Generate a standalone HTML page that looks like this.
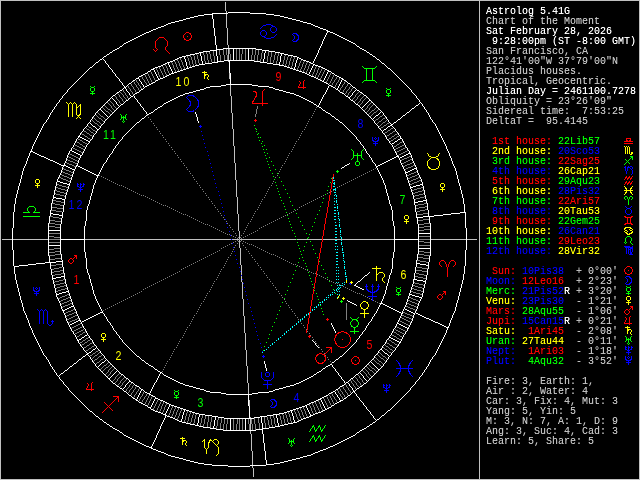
<!DOCTYPE html>
<html><head><meta charset="utf-8"><title>Astrolog 5.41G</title>
<style>html,body{margin:0;padding:0;background:#000;overflow:hidden}svg{display:block}text,tspan{white-space:pre}</style>
</head><body>
<svg width="640" height="480" viewBox="0 0 640 480">
<defs><filter id="tf" x="0" y="0" width="640" height="480" filterUnits="userSpaceOnUse" color-interpolation-filters="sRGB"><feComponentTransfer><feFuncR type="linear" slope="1"/><feFuncG type="linear" slope="1"/><feFuncB type="linear" slope="1"/><feFuncA type="linear" slope="1.2"/></feComponentTransfer></filter><filter id="tf2" x="0" y="0" width="640" height="480" filterUnits="userSpaceOnUse" color-interpolation-filters="sRGB"><feComponentTransfer><feFuncA type="linear" slope="1"/></feComponentTransfer></filter></defs>
<rect width="640" height="480" fill="#000"/>
<g fill="none" stroke-width="1" shape-rendering="crispEdges"><path stroke="#c0c0c0" d="M0,0.5h640M2,239.5h10M13,239.5h35M85,239.5h146M232,239.5h7M240,239.5h56M297,239.5h25M323,239.5h71M431,239.5h35M467,239.5h10M0,479.5h640M0.5,1v478M225.5,2v9M226.5,11v2M226.5,14v14M227.5,28v17M228.5,45v3M228.5,49v11M228,61.5h1M229.5,73v6M230.5,85v11M231.5,96v17M232.5,113v16M233.5,129v17M234.5,146v17M235.5,163v17M236.5,180v17M237.5,197v17M238.5,214v17M239.5,231v8M239.5,240v8M240.5,248v17M241.5,265v10M241.5,276v6M242.5,282v17M243.5,299v17M244.5,316v17M245.5,333v17M246.5,350v16M247.5,366v17M248.5,383v11M249.5,400v6M250,417.5h1M250.5,419v11M250.5,431v3M251.5,434v17M252.5,451v14M252.5,466v2M253.5,468v9M479.5,1v478M639.5,1v478"/><path stroke="#fff" d="M228,12.5h22M212,13.5h16M250,13.5h16M204,14.5h9M266,14.5h8M198,15.5h6M274,15.5h6M194,16.5h4M280,16.5h4M190,17.5h4M284,17.5h4M186,18.5h4M288,18.5h4M183,19.5h3M292,19.5h4M179,20.5h4M296,20.5h4M175,21.5h4M300,21.5h3M171,22.5h4M303,22.5h4M168,23.5h3M307,23.5h4M166,24.5h2M311,24.5h2M164,25.5h2M313,25.5h2M161,26.5h3M315,26.5h3M158,27.5h3M318,27.5h2M156,28.5h2M320,28.5h3M153,29.5h3M323,29.5h3M151,30.5h2M326,30.5h2M149,31.5h2M327,31.5h3M146,32.5h3M330,32.5h3M144,33.5h2M333,33.5h2M142,34.5h2M335,34.5h2M140,35.5h2M337,35.5h2M138,36.5h2M339,36.5h2M136,37.5h2M341,37.5h2M134,38.5h2M343,38.5h2M132,39.5h2M345,39.5h2M130,40.5h2M347,40.5h2M128,41.5h2M349,41.5h2M126,42.5h2M351,42.5h2M124,43.5h2M353,43.5h2M120,46.5h2M357,46.5h2M117,48.5h2M223,48.5h33M360,48.5h2M115,49.5h2M216,49.5h7M256,49.5h6M362,49.5h2M113,50.5h2M210,50.5h7M262,50.5h7M364,50.5h2M203,51.5h7M269,51.5h6M110,52.5h2M199,52.5h4M275,52.5h5M367,52.5h2M195,53.5h4M280,53.5h4M107,54.5h2M190,54.5h5M284,54.5h4M370,54.5h2M186,55.5h4M288,55.5h5M104,56.5h2M182,56.5h4M293,56.5h4M373,56.5h2M179,57.5h3M297,57.5h2M177,58.5h2M299,58.5h2M100,59.5h2M175,59.5h2M301,59.5h2M377,59.5h2M173,60.5h2M224,60.5h30M303,60.5h3M170,61.5h3M217,61.5h7M254,61.5h6M306,61.5h3M96,62.5h2M167,62.5h3M212,62.5h6M260,62.5h7M309,62.5h2M165,63.5h2M205,63.5h7M267,63.5h6M311,63.5h2M382,63.5h2M163,64.5h2M199,64.5h6M273,64.5h7M313,64.5h2M161,65.5h2M195,65.5h4M279,65.5h5M315,65.5h3M158,66.5h3M192,66.5h3M284,66.5h3M318,66.5h3M90,67.5h2M155,67.5h3M189,67.5h3M287,67.5h3M321,67.5h2M153,68.5h2M186,68.5h3M290,68.5h3M323,68.5h2M388,68.5h2M151,69.5h3M183,69.5h3M293,69.5h3M325,69.5h2M180,70.5h3M296,70.5h3M327,70.5h2M148,71.5h2M177,71.5h3M299,71.5h3M328,71.5h3M174,72.5h3M302,72.5h3M145,73.5h2M171,73.5h3M305,73.5h2M332,73.5h2M143,74.5h2M169,74.5h2M307,74.5h2M141,75.5h2M167,75.5h2M309,75.5h2M335,75.5h2M139,76.5h2M165,76.5h2M311,76.5h3M337,76.5h2M163,77.5h2M314,77.5h2M339,77.5h2M136,78.5h3M160,78.5h3M316,78.5h2M341,78.5h2M158,79.5h2M318,79.5h2M342,79.5h2M133,80.5h2M156,80.5h2M320,80.5h2M344,80.5h2M322,81.5h2M153,82.5h2M324,82.5h2M129,83.5h2M151,83.5h2M326,83.5h2M348,83.5h2M149,84.5h2M226,84.5h26M147,85.5h2M221,85.5h5M252,85.5h6M329,85.5h2M145,86.5h2M210,86.5h11M258,86.5h11M331,86.5h2M124,87.5h2M206,87.5h4M269,87.5h4M333,87.5h2M353,87.5h2M204,88.5h2M273,88.5h2M141,89.5h2M200,89.5h4M275,89.5h4M336,89.5h2M120,90.5h2M196,90.5h4M279,90.5h4M357,90.5h2M193,91.5h3M283,91.5h3M117,92.5h2M137,92.5h2M189,92.5h4M286,92.5h4M340,92.5h2M360,92.5h2M135,93.5h2M185,93.5h4M290,93.5h4M342,93.5h2M183,94.5h2M294,94.5h2M113,95.5h2M180,95.5h3M296,95.5h3M364,95.5h2M131,96.5h2M178,96.5h2M299,96.5h2M346,96.5h2M176,97.5h2M301,97.5h2M348,97.5h2M174,98.5h2M303,98.5h2M172,99.5h2M305,99.5h2M126,100.5h2M170,100.5h2M307,100.5h2M351,100.5h2M369,100.5h2M168,101.5h2M309,101.5h2M166,102.5h2M311,102.5h2M164,103.5h2M121,104.5h2M314,104.5h2M356,104.5h2M416,105.5h2M160,106.5h2M317,106.5h2M158,107.5h2M319,107.5h2M412,108.5h2M99,109.5h2M155,109.5h2M323,110.5h2M151,112.5h2M326,112.5h2M407,112.5h2M149,113.5h2M328,113.5h2M147,114.5h2M376,115.5h2M403,115.5h2M332,116.5h2M142,118.5h2M336,119.5h2M398,119.5h2M137,122.5h2M340,122.5h2M394,122.5h2M391,124.5h2M390,125.5h2M93,126.5h2M388,126.5h2M97,129.5h2M384,129.5h2M78,136.5h2M80,137.5h2M82,138.5h2M400,138.5h2M84,139.5h2M398,139.5h2M86,140.5h2M88,141.5h2M395,141.5h2M392,143.5h2M70,150.5h2M30,151.5h3M72,151.5h2M33,152.5h2M74,152.5h2M35,153.5h2M76,153.5h2M408,153.5h3M37,154.5h2M78,154.5h2M406,154.5h2M39,155.5h2M80,155.5h2M404,155.5h2M41,156.5h3M396,156.5h3M402,156.5h2M44,157.5h2M394,157.5h2M400,157.5h2M46,158.5h2M392,158.5h2M48,159.5h2M390,159.5h2M50,160.5h3M388,160.5h2M53,161.5h2M386,161.5h2M55,162.5h2M384,162.5h2M57,163.5h2M382,163.5h2M59,164.5h2M347,164.5h2M380,164.5h2M61,165.5h5M76,165.5h2M345,165.5h2M378,165.5h2M66,166.5h2M78,166.5h2M376,166.5h2M68,167.5h2M80,167.5h2M342,167.5h2M70,168.5h2M82,168.5h2M414,168.5h3M72,169.5h3M84,169.5h2M412,169.5h2M86,170.5h2M410,170.5h2M88,171.5h2M408,171.5h2M90,172.5h2M405,172.5h3M92,173.5h2M94,174.5h2M96,175.5h3M57,181.5h3M60,182.5h3M63,183.5h4M67,184.5h3M420,184.5h3M416,185.5h4M413,186.5h3M410,187.5h3M53,197.5h3M56,198.5h6M62,199.5h3M423,200.5h4M418,201.5h5M414,202.5h4M460,212.5h6M50,213.5h3M451,213.5h9M53,214.5h6M443,214.5h8M59,215.5h4M434,215.5h9M423,216.5h11M416,217.5h7M48,230.5h13M418,233.5h13M60,239.5h25M394,239.5h25M48,245.5h13M418,248.5h13M56,261.5h7M45,262.5h11M36,263.5h9M416,263.5h4M28,264.5h8M420,264.5h6M19,265.5h9M426,265.5h3M14,266.5h5M365,275.5h2M61,276.5h4M56,277.5h5M52,278.5h4M413,279.5h4M417,280.5h6M358,281.5h2M423,281.5h3M354,285.5h2M356,286.5h2M358,287.5h2M360,288.5h2M362,289.5h2M66,291.5h3M62,292.5h4M59,293.5h3M56,294.5h3M409,294.5h3M412,295.5h3M415,296.5h4M419,297.5h3M348,301.5h2M350,302.5h2M352,303.5h2M380,303.5h3M354,304.5h2M383,304.5h2M385,305.5h2M71,306.5h3M387,306.5h2M69,307.5h2M389,307.5h2M67,308.5h2M391,308.5h2M65,309.5h2M393,309.5h2M405,309.5h2M62,310.5h3M395,310.5h2M407,310.5h2M397,311.5h2M409,311.5h2M100,312.5h3M399,312.5h2M411,312.5h2M98,313.5h2M401,313.5h2M413,313.5h2M416,313.5h2M96,314.5h2M418,314.5h2M94,315.5h2M420,315.5h2M92,316.5h2M422,316.5h2M90,317.5h2M424,317.5h2M88,318.5h2M426,318.5h3M86,319.5h2M429,319.5h2M78,320.5h3M84,320.5h2M431,320.5h2M76,321.5h2M82,321.5h2M433,321.5h2M74,322.5h2M435,322.5h3M72,323.5h2M397,323.5h2M438,323.5h2M70,324.5h2M399,324.5h2M440,324.5h2M401,325.5h2M442,325.5h2M403,326.5h2M444,326.5h2M405,327.5h2M446,327.5h3M407,328.5h2M85,335.5h2M82,337.5h2M389,337.5h2M391,338.5h2M79,339.5h2M393,339.5h2M77,340.5h2M395,340.5h2M397,341.5h2M399,342.5h2M93,349.5h2M380,349.5h2M89,352.5h2M87,353.5h2M385,353.5h2M86,354.5h2M83,356.5h2M137,356.5h2M340,356.5h2M79,359.5h2M336,359.5h2M142,360.5h2M102,362.5h2M332,362.5h2M74,363.5h2M146,363.5h2M330,364.5h2M149,365.5h2M328,365.5h2M70,366.5h2M151,366.5h2M326,366.5h2M323,368.5h2M155,369.5h2M378,369.5h2M65,370.5h2M158,371.5h2M319,371.5h2M160,372.5h2M317,372.5h2M61,373.5h2M121,374.5h2M314,374.5h2M356,374.5h2M164,375.5h2M166,376.5h2M311,376.5h2M168,377.5h2M309,377.5h2M108,378.5h2M126,378.5h2M170,378.5h2M307,378.5h2M351,378.5h2M172,379.5h2M305,379.5h2M174,380.5h2M303,380.5h2M129,381.5h2M176,381.5h2M301,381.5h2M131,382.5h2M178,382.5h2M299,382.5h2M346,382.5h2M113,383.5h2M180,383.5h3M296,383.5h3M364,383.5h2M183,384.5h2M294,384.5h2M135,385.5h2M185,385.5h4M290,385.5h4M342,385.5h2M117,386.5h2M137,386.5h2M189,386.5h4M286,386.5h4M340,386.5h2M360,386.5h2M193,387.5h3M283,387.5h3M120,388.5h2M196,388.5h4M279,388.5h4M357,388.5h2M141,389.5h2M200,389.5h4M275,389.5h4M336,389.5h2M204,390.5h2M273,390.5h2M124,391.5h2M206,391.5h4M269,391.5h4M333,391.5h2M353,391.5h2M145,392.5h2M210,392.5h11M258,392.5h11M331,392.5h2M147,393.5h3M221,393.5h5M252,393.5h6M329,393.5h2M149,394.5h2M226,394.5h26M129,395.5h2M151,395.5h2M326,395.5h2M348,395.5h2M153,396.5h2M324,396.5h2M322,397.5h2M133,398.5h2M155,398.5h3M320,398.5h2M344,398.5h2M135,399.5h2M158,399.5h2M318,399.5h3M136,400.5h2M160,400.5h3M316,400.5h2M340,400.5h3M163,401.5h2M314,401.5h2M339,401.5h2M139,402.5h2M165,402.5h2M311,402.5h3M337,402.5h2M141,403.5h2M167,403.5h2M309,403.5h2M335,403.5h2M143,404.5h2M169,404.5h2M307,404.5h2M145,405.5h2M171,405.5h3M305,405.5h2M332,405.5h2M174,406.5h3M302,406.5h3M148,407.5h3M177,407.5h3M299,407.5h3M329,407.5h2M180,408.5h3M296,408.5h3M327,408.5h2M151,409.5h2M183,409.5h3M293,409.5h3M325,409.5h2M153,410.5h2M186,410.5h3M290,410.5h3M323,410.5h2M388,410.5h2M90,411.5h2M155,411.5h3M189,411.5h3M287,411.5h3M321,411.5h2M158,412.5h3M192,412.5h3M284,412.5h3M318,412.5h3M161,413.5h2M195,413.5h4M279,413.5h5M315,413.5h3M163,414.5h3M199,414.5h6M273,414.5h6M313,414.5h2M165,415.5h2M205,415.5h7M267,415.5h6M310,415.5h3M382,415.5h2M96,416.5h2M167,416.5h3M212,416.5h6M260,416.5h7M309,416.5h2M170,417.5h3M218,417.5h6M254,417.5h6M306,417.5h3M173,418.5h2M224,418.5h30M303,418.5h3M100,419.5h2M175,419.5h2M301,419.5h2M377,419.5h2M177,420.5h2M299,420.5h2M179,421.5h3M297,421.5h2M104,422.5h2M182,422.5h4M293,422.5h4M373,422.5h2M186,423.5h4M288,423.5h5M107,424.5h2M190,424.5h5M284,424.5h4M370,424.5h2M195,425.5h4M280,425.5h4M110,426.5h2M199,426.5h4M275,426.5h5M367,426.5h2M203,427.5h7M269,427.5h6M113,428.5h2M210,428.5h6M262,428.5h7M364,428.5h2M115,429.5h2M216,429.5h7M256,429.5h7M362,429.5h2M117,430.5h2M223,430.5h33M360,430.5h2M120,432.5h2M357,432.5h2M124,435.5h2M353,435.5h2M126,436.5h2M351,436.5h2M128,437.5h2M349,437.5h2M130,438.5h2M347,438.5h2M132,439.5h2M345,439.5h2M134,440.5h2M343,440.5h2M136,441.5h2M341,441.5h2M138,442.5h2M339,442.5h2M140,443.5h2M337,443.5h2M142,444.5h2M335,444.5h2M144,445.5h2M333,445.5h2M146,446.5h3M330,446.5h3M149,447.5h3M328,447.5h2M151,448.5h2M326,448.5h2M153,449.5h3M323,449.5h3M156,450.5h2M320,450.5h3M158,451.5h3M318,451.5h2M161,452.5h3M315,452.5h3M164,453.5h2M313,453.5h2M166,454.5h2M311,454.5h2M168,455.5h3M307,455.5h4M171,456.5h4M303,456.5h4M175,457.5h4M300,457.5h3M179,458.5h4M296,458.5h4M183,459.5h3M292,459.5h4M186,460.5h4M288,460.5h4M190,461.5h4M284,461.5h4M194,462.5h4M280,462.5h4M198,463.5h6M274,463.5h6M204,464.5h8M266,464.5h8M212,465.5h16M250,465.5h16M228,466.5h22M12.5,228v22M13.5,212v16M13.5,250v16M14.5,204v8M14.5,267v7M15.5,198v6M15.5,274v6M16.5,194v4M16.5,280v4M17.5,190v4M17.5,284v4M18.5,186v4M18.5,288v4M19.5,183v3M19.5,292v4M20.5,179v4M20.5,296v4M21.5,175v4M21.5,300v3M22.5,171v4M22.5,303v4M23.5,168v3M23.5,307v4M24.5,166v2M24.5,311v2M25.5,164v2M25.5,313v2M26.5,161v3M26.5,315v3M27.5,158v3M27.5,318v2M28.5,156v2M28.5,320v3M29.5,153v3M29.5,323v3M30,152.5h1M30.5,326v2M31.5,149v2M31.5,328v2M32.5,146v3M32.5,330v3M33.5,144v2M33.5,333v2M34.5,142v2M34.5,335v2M35.5,140v2M35.5,337v2M36.5,138v2M36.5,339v2M37.5,136v2M37.5,341v2M38.5,134v2M38.5,343v2M39.5,132v2M39.5,345v2M40.5,130v2M40.5,347v2M41.5,128v2M41.5,349v2M42.5,126v2M42.5,351v2M43.5,124v2M43.5,353v2M44,123.5h1M44,355.5h1M45,122.5h1M45,356.5h1M46.5,120v2M46.5,357v2M47,119.5h1M47,359.5h1M48.5,117v2M48.5,223v7M48.5,231v14M48.5,246v10M48.5,360v2M49.5,115v2M49.5,216v7M49.5,256v6M49.5,362v2M50.5,113v2M50.5,210v3M50.5,214v2M50.5,263v6M50.5,364v2M51,112.5h1M51.5,203v7M51.5,269v6M51,366.5h1M52.5,110v2M52.5,199v4M52.5,275v3M52,279.5h1M52.5,367v2M53,109.5h1M53.5,195v2M53,198.5h1M53.5,280v4M53,369.5h1M54.5,107v2M54.5,190v5M54.5,284v4M54.5,370v2M55,106.5h1M55.5,186v4M55.5,288v5M55,372.5h1M56.5,104v2M56.5,182v4M56,293.5h1M56.5,295v2M56.5,373v2M57,103.5h1M57.5,179v2M57.5,297v2M57,375.5h1M58,102.5h1M58.5,177v2M58.5,299v2M58,376.5h1M59.5,100v2M59.5,175v2M59.5,301v2M59,375.5h1M59.5,377v2M60,99.5h1M60.5,173v2M60.5,224v6M60.5,231v8M60.5,240v5M60.5,246v8M60.5,303v3M60,374.5h1M60,379.5h1M61,98.5h1M61.5,170v3M61.5,218v6M61.5,254v6M61.5,306v3M61,380.5h1M62.5,96v2M62.5,167v3M62.5,212v3M62.5,216v2M62,260.5h1M62.5,262v5M62,309.5h1M62,381.5h1M63,95.5h1M63,166.5h1M63.5,205v7M63.5,267v6M63.5,311v2M63,372.5h1M63.5,382v2M64,94.5h1M64.5,163v2M64.5,200v5M64.5,273v3M64.5,277v2M64.5,313v2M64,371.5h1M64,384.5h1M65,93.5h1M65.5,161v2M65.5,195v4M65.5,279v5M65.5,315v3M65,385.5h1M66,92.5h1M66.5,158v3M66.5,192v3M66.5,284v3M66.5,318v3M66,386.5h1M67.5,90v2M67.5,155v3M67.5,189v3M67.5,287v3M67.5,321v2M67,369.5h1M67,387.5h1M68,89.5h1M68.5,153v2M68.5,186v3M68,290.5h1M68,292.5h1M68.5,323v2M68,368.5h1M68.5,388v2M69,88.5h1M69.5,151v2M69,183.5h1M69,185.5h1M69.5,293v3M69.5,325v2M69,367.5h1M69,390.5h1M70,87.5h1M70.5,180v3M70.5,296v3M70.5,327v2M70,391.5h1M71,86.5h1M71.5,148v2M71.5,177v3M71.5,299v3M71.5,329v2M71,392.5h1M72,85.5h1M72,147.5h1M72.5,174v3M72.5,302v3M72,331.5h1M72,365.5h1M72,393.5h1M73,84.5h1M73.5,145v2M73.5,171v3M73,305.5h1M73.5,332v2M73,364.5h1M73,394.5h1M74,83.5h1M74.5,143v2M74,170.5h1M74.5,307v2M74,334.5h1M74,395.5h1M75,82.5h1M75.5,141v2M75.5,167v2M75.5,309v2M75.5,335v2M75,396.5h1M76,81.5h1M76.5,139v2M76,166.5h1M76.5,311v3M76.5,337v2M76,362.5h1M76,397.5h1M77,80.5h1M77,138.5h1M77.5,163v2M77.5,314v2M77,339.5h1M77,361.5h1M77,398.5h1M78,79.5h1M78,137.5h1M78.5,160v3M78.5,316v2M78.5,341v2M78,360.5h1M78,399.5h1M79,78.5h1M79,135.5h1M79.5,158v2M79.5,318v2M79,343.5h1M79,400.5h1M80,77.5h1M80.5,133v2M80.5,156v2M80,321.5h1M80.5,344v2M80,401.5h1M81,76.5h1M81,132.5h1M81.5,322v2M81,338.5h1M81,346.5h1M81,358.5h1M81,402.5h1M82,75.5h1M82,131.5h1M82.5,153v2M82.5,324v2M82,347.5h1M82,357.5h1M82,403.5h1M83,74.5h1M83.5,129v2M83.5,151v2M83.5,326v2M83.5,348v2M83,404.5h1M84,73.5h1M84,128.5h1M84.5,149v2M84.5,226v13M84.5,240v12M84,328.5h1M84,336.5h1M84,350.5h1M84,405.5h1M85,72.5h1M85,127.5h1M85.5,147v2M85.5,221v5M85.5,252v6M85.5,329v2M85,351.5h1M85,355.5h1M85,406.5h1M86,71.5h1M86,126.5h1M86.5,145v2M86.5,210v11M86.5,258v11M86.5,331v2M86,352.5h1M86,407.5h1M87,70.5h1M87.5,124v2M87,144.5h1M87.5,206v4M87.5,269v4M87.5,333v2M87,408.5h1M88,69.5h1M88,123.5h1M88,143.5h1M88.5,204v2M88.5,273v2M88,335.5h1M88,355.5h1M88,409.5h1M89,68.5h1M89,122.5h1M89,142.5h1M89.5,200v4M89.5,275v4M89.5,336v2M89,356.5h1M89,410.5h1M90.5,120v2M90,123.5h1M90,140.5h1M90.5,196v4M90.5,279v4M90,338.5h1M90.5,357v2M91,119.5h1M91,124.5h1M91,139.5h1M91.5,193v3M91.5,283v3M91,339.5h1M91,351.5h1M91,359.5h1M92,66.5h1M92.5,117v2M92,125.5h1M92.5,137v2M92.5,189v4M92.5,286v4M92.5,340v2M92,350.5h1M92.5,360v2M92,412.5h1M93,65.5h1M93,116.5h1M93.5,135v2M93.5,185v4M93.5,290v4M93.5,342v2M93,362.5h1M93,413.5h1M94,64.5h1M94,115.5h1M94,134.5h1M94.5,183v2M94.5,294v2M94,344.5h1M94,363.5h1M94,414.5h1M95,63.5h1M95.5,113v2M95,127.5h1M95,133.5h1M95.5,180v3M95.5,296v3M95,345.5h1M95,348.5h1M95.5,364v2M95,415.5h1M96,112.5h1M96,128.5h1M96.5,131v2M96.5,178v2M96.5,299v2M96.5,346v2M96,366.5h1M97,111.5h1M97,130.5h1M97.5,176v2M97.5,301v2M97,348.5h1M97,367.5h1M98,61.5h1M98,110.5h1M98,174.5h1M98.5,303v2M98,349.5h1M98,366.5h1M98,368.5h1M98,417.5h1M99,60.5h1M99,128.5h1M99.5,172v2M99.5,305v2M99,350.5h1M99,365.5h1M99,369.5h1M99,418.5h1M100,108.5h1M100.5,126v2M100.5,170v2M100.5,307v2M100.5,351v2M100,364.5h1M100,370.5h1M101,107.5h1M101,110.5h1M101,125.5h1M101.5,168v2M101.5,309v2M101,353.5h1M101,363.5h1M101,371.5h1M102,58.5h1M102,106.5h1M102,111.5h1M102,124.5h1M102.5,166v2M102,311.5h1M102,354.5h1M102,372.5h1M102,420.5h1M103,57.5h1M103,59.5h1M103,105.5h1M103,112.5h1M103,123.5h1M103.5,164v2M103,313.5h1M103,355.5h1M103,373.5h1M103,421.5h1M104,60.5h1M104,104.5h1M104,113.5h1M104.5,121v2M104,163.5h1M104.5,314v2M104.5,356v2M104,361.5h1M104,374.5h1M105.5,61v2M105,103.5h1M105,114.5h1M105,120.5h1M105,162.5h1M105,316.5h1M105,358.5h1M105,360.5h1M105,375.5h1M106,55.5h1M106,63.5h1M106,102.5h1M106,115.5h1M106,119.5h1M106.5,160v2M106.5,317v2M106,359.5h1M106,376.5h1M106,423.5h1M107,64.5h1M107,101.5h1M107,116.5h1M107,118.5h1M107.5,158v2M107.5,319v2M107,360.5h1M107,377.5h1M108.5,65v2M108,100.5h1M108,117.5h1M108,157.5h1M108,321.5h1M108,361.5h1M109,53.5h1M109,67.5h1M109,99.5h1M109,116.5h1M109.5,155v2M109,322.5h1M109,362.5h1M109,379.5h1M109,425.5h1M110,68.5h1M110,98.5h1M110,115.5h1M110,154.5h1M110.5,323v2M110,363.5h1M110,377.5h1M110,380.5h1M111,69.5h1M111,97.5h1M111,114.5h1M111,153.5h1M111,325.5h1M111,364.5h1M111,376.5h1M111,381.5h1M112,51.5h1M112.5,70v2M112,96.5h1M112,98.5h1M112,113.5h1M112.5,151v2M112.5,326v2M112,365.5h1M112,375.5h1M112,382.5h1M112,427.5h1M113,72.5h1M113,99.5h1M113,112.5h1M113.5,149v2M113.5,328v2M113,366.5h1M113,374.5h1M114,73.5h1M114,100.5h1M114,111.5h1M114,148.5h1M114,330.5h1M114,367.5h1M114,373.5h1M115.5,74v2M115,94.5h1M115,101.5h1M115,110.5h1M115.5,146v2M115,331.5h1M115,368.5h1M115,372.5h1M115,384.5h1M116,76.5h1M116,93.5h1M116.5,102v2M116,109.5h1M116,145.5h1M116.5,332v2M116,369.5h1M116,371.5h1M116,385.5h1M117,77.5h1M117,104.5h1M117,108.5h1M117,144.5h1M117,334.5h1M117,370.5h1M118,78.5h1M118,105.5h1M118,107.5h1M118.5,142v2M118,335.5h1M118,371.5h1M119,47.5h1M119.5,79v2M119,91.5h1M119,106.5h1M119,141.5h1M119.5,336v2M119,372.5h1M119,387.5h1M119,431.5h1M120,81.5h1M120,105.5h1M120,140.5h1M120,338.5h1M120,373.5h1M121,82.5h1M121,139.5h1M121,339.5h1M122,45.5h1M122.5,83v2M122,89.5h1M122.5,137v2M122.5,340v2M122,389.5h1M122,433.5h1M123,44.5h1M123,85.5h1M123,88.5h1M123,103.5h1M123,136.5h1M123,342.5h1M123,375.5h1M123,388.5h1M123,390.5h1M123,434.5h1M124,86.5h1M124,102.5h1M124,135.5h1M124,343.5h1M124,376.5h1M124,387.5h1M125,88.5h1M125,101.5h1M125,134.5h1M125,344.5h1M125,377.5h1M125.5,385v2M126,86.5h1M126.5,89v2M126,133.5h1M126,345.5h1M126,384.5h1M126,392.5h1M127,85.5h1M127,91.5h1M127,132.5h1M127,346.5h1M127,383.5h1M127,393.5h1M128,84.5h1M128,92.5h1M128,99.5h1M128,131.5h1M128,347.5h1M128,379.5h1M128,382.5h1M128,394.5h1M129.5,93v2M129,98.5h1M129,130.5h1M129,348.5h1M129,380.5h1M130,95.5h1M130,97.5h1M130,129.5h1M130,349.5h1M131,82.5h1M131,128.5h1M131,350.5h1M131,396.5h1M132,81.5h1M132,127.5h1M132,351.5h1M132,397.5h1M133,95.5h1M133,126.5h1M133,352.5h1M133,383.5h1M134,94.5h1M134.5,96v2M134,125.5h1M134,353.5h1M134,384.5h1M135,79.5h1M135,98.5h1M135,124.5h1M135,354.5h1M136,99.5h1M136,123.5h1M136,355.5h1M137.5,100v2M137.5,397v2M138,77.5h1M138,102.5h1M138.5,395v2M138,401.5h1M139.5,79v2M139,91.5h1M139,103.5h1M139,121.5h1M139,357.5h1M139,387.5h1M139.5,393v2M140,81.5h1M140,90.5h1M140.5,104v2M140,120.5h1M140,358.5h1M140,388.5h1M140.5,391v2M141.5,82v2M141,106.5h1M141,119.5h1M141,359.5h1M141,390.5h1M142,84.5h1M142,107.5h1M143.5,85v2M143,88.5h1M143.5,108v2M143,390.5h1M144,87.5h1M144,110.5h1M144,117.5h1M144,361.5h1M144,391.5h1M145,111.5h1M145,116.5h1M145,362.5h1M146.5,112v2M146,115.5h1M147,72.5h1M147,406.5h1M148,364.5h1M150,70.5h1M150.5,391v2M150,408.5h1M151.5,389v2M151.5,405v2M151,446.5h1M152.5,387v2M152.5,403v2M152.5,444v2M153,111.5h1M153,367.5h1M153.5,385v2M153.5,401v2M153.5,442v2M154.5,70v2M154,110.5h1M154,368.5h1M154.5,383v2M154.5,399v2M154.5,440v2M155.5,72v2M155,81.5h1M155,382.5h1M155,397.5h1M155.5,438v2M156.5,74v2M156.5,380v2M156.5,435v3M157.5,76v2M157,108.5h1M157,370.5h1M157.5,378v2M157.5,433v2M158,78.5h1M158.5,376v2M158.5,431v2M159.5,374v2M159.5,429v2M160,373.5h1M160.5,426v3M161.5,424v2M162,105.5h1M162,373.5h1M162.5,422v2M163,104.5h1M163,374.5h1M163.5,420v2M164.5,418v2M165,413.5h1M165.5,416v2M166.5,411v2M167.5,409v2M168.5,63v2M168.5,407v2M169.5,65v2M169.5,405v2M170.5,67v2M171.5,69v2M172.5,71v2M181.5,419v2M182.5,415v4M183.5,412v3M184.5,57v2M184.5,410v2M185.5,59v3M186.5,62v4M187.5,66v2M195.5,112v2M196.5,114v3M197.5,117v4M197.5,423v2M198.5,121v2M198.5,417v6M199.5,415v2M200.5,53v3M201.5,56v5M202.5,61v3M212.5,15v4M213.5,19v9M213.5,426v2M214.5,28v8M214.5,420v6M215.5,36v9M215.5,417v3M216.5,45v4M216.5,51v5M217.5,56v5M229.5,61v12M230.5,73v11M230.5,419v11M233.5,49v11M245.5,419v11M248.5,49v11M248.5,395v11M249.5,406v12M261.5,417v6M262.5,423v5M262.5,430v4M263.5,59v3M263.5,434v9M264.5,53v6M264.5,361v3M264.5,443v8M265.5,51v2M265.5,364v4M265.5,451v9M266.5,368v3M266.5,460v4M276.5,415v3M277.5,418v5M278.5,423v3M279.5,62v2M280.5,56v6M281.5,54v2M291.5,411v2M292.5,413v3M293.5,416v4M294.5,67v2M294.5,420v2M295.5,63v4M296.5,60v3M297.5,58v2M306.5,406v2M307.5,408v2M308.5,410v2M309.5,72v2M309.5,412v2M310.5,70v2M310,414.5h1M311.5,68v2M312.5,66v2M312,340.5h1M313.5,61v2M313,65.5h1M313,103.5h1M313,341.5h1M313,375.5h1M314.5,59v2M314,342.5h1M315.5,57v2M315.5,343v2M316.5,55v2M316,105.5h1M316,345.5h1M316,373.5h1M317.5,53v2M317,346.5h1M318.5,50v3M318,105.5h1M318,347.5h1M319.5,48v2M319.5,103v2M320.5,46v2M320.5,101v2M321.5,44v2M321.5,99v2M321,108.5h1M321,370.5h1M321.5,400v2M322.5,41v3M322.5,97v2M322,109.5h1M322,369.5h1M322.5,402v2M323.5,39v2M323,80.5h1M323.5,95v2M323.5,404v2M324.5,37v2M324.5,78v2M324,94.5h1M324.5,406v2M325.5,35v2M325.5,76v2M325.5,92v2M325,111.5h1M325,367.5h1M325,408.5h1M326.5,33v2M326.5,74v2M326.5,90v2M327,32.5h1M327.5,72v2M327.5,88v2M328,84.5h1M328.5,86v2M328,394.5h1M330,114.5h1M331,72.5h1M331,115.5h1M331.5,323v2M331,406.5h1M332.5,325v2M332.5,365v2M333.5,327v2M333,367.5h1M334,74.5h1M334,117.5h1M334.5,329v2M334,361.5h1M334,368.5h1M334,404.5h1M335,88.5h1M335,118.5h1M335.5,331v2M335,360.5h1M335.5,369v2M335,390.5h1M335.5,392v2M336,371.5h1M336,394.5h1M337,88.5h1M337,372.5h1M337.5,395v2M338.5,86v2M338,90.5h1M338,120.5h1M338,358.5h1M338.5,373v2M338,388.5h1M338,397.5h1M339.5,84v2M339,91.5h1M339,121.5h1M339,357.5h1M339,375.5h1M339,387.5h1M339.5,398v2M340.5,82v2M340,376.5h1M341.5,80v2M341,168.5h1M341.5,377v2M342,123.5h1M342,355.5h1M342,379.5h1M343,124.5h1M343,354.5h1M343,380.5h1M343,399.5h1M344,94.5h1M344,125.5h1M344,166.5h1M344,353.5h1M344.5,381v2M344,384.5h1M345,95.5h1M345,126.5h1M345,352.5h1M345,383.5h1M346,81.5h1M346,127.5h1M346,351.5h1M346,397.5h1M347,82.5h1M347,128.5h1M347,300.5h1M347,350.5h1M347,396.5h1M348,129.5h1M348,349.5h1M348,381.5h1M348,383.5h1M349,98.5h1M349,130.5h1M349,163.5h1M349,348.5h1M349,380.5h1M349.5,384v2M350,84.5h1M350,96.5h1M350,99.5h1M350,131.5h1M350,347.5h1M350,379.5h1M350,386.5h1M350,394.5h1M351,85.5h1M351,95.5h1M351,132.5h1M351,346.5h1M351,387.5h1M351,393.5h1M352,86.5h1M352.5,93v2M352,133.5h1M352,345.5h1M352.5,388v2M352,392.5h1M353,92.5h1M353,101.5h1M353,134.5h1M353,344.5h1M353,377.5h1M353,390.5h1M354,91.5h1M354,102.5h1M354,135.5h1M354,343.5h1M354,376.5h1M354,392.5h1M355,44.5h1M355,88.5h1M355,90.5h1M355,103.5h1M355,136.5h1M355,284.5h1M355,342.5h1M355,375.5h1M355,390.5h1M355,393.5h1M355,434.5h1M356,45.5h1M356,89.5h1M356.5,137v2M356,283.5h1M356,305.5h1M356.5,340v2M356,389.5h1M356.5,394v2M356,433.5h1M357,139.5h1M357,282.5h1M357,339.5h1M357,396.5h1M358,105.5h1M358,140.5h1M358,338.5h1M358,373.5h1M358,397.5h1M359,47.5h1M359,91.5h1M359,106.5h1M359,141.5h1M359.5,336v2M359,372.5h1M359,387.5h1M359.5,398v2M359,431.5h1M360,107.5h1M360.5,142v2M360,280.5h1M360,335.5h1M360,371.5h1M360,373.5h1M360,400.5h1M361,108.5h1M361,144.5h1M361,279.5h1M361,334.5h1M361,370.5h1M361,374.5h1M361,401.5h1M362,93.5h1M362,107.5h1M362,109.5h1M362,145.5h1M362,278.5h1M362.5,332v2M362,369.5h1M362,375.5h1M362,385.5h1M362,402.5h1M363,94.5h1M363,106.5h1M363,110.5h1M363.5,146v2M363,277.5h1M363,331.5h1M363,368.5h1M363.5,376v2M363,384.5h1M363.5,403v2M364,105.5h1M364,111.5h1M364,148.5h1M364,276.5h1M364,330.5h1M364,367.5h1M364,378.5h1M364,405.5h1M365,104.5h1M365,112.5h1M365.5,149v2M365.5,328v2M365,366.5h1M365,379.5h1M365,406.5h1M366,51.5h1M366,96.5h1M366,103.5h1M366,113.5h1M366.5,151v2M366.5,326v2M366,365.5h1M366,380.5h1M366,382.5h1M366.5,407v2M366,427.5h1M367,97.5h1M367,102.5h1M367,114.5h1M367,153.5h1M367,274.5h1M367,325.5h1M367,364.5h1M367,381.5h1M367,409.5h1M368,98.5h1M368,101.5h1M368,115.5h1M368,154.5h1M368,273.5h1M368.5,323v2M368,363.5h1M368,380.5h1M368,410.5h1M369,53.5h1M369,99.5h1M369,116.5h1M369.5,155v2M369,272.5h1M369,322.5h1M369,362.5h1M369,379.5h1M369,411.5h1M369,425.5h1M370,117.5h1M370,157.5h1M370,321.5h1M370,361.5h1M370,378.5h1M370.5,412v2M371,101.5h1M371,118.5h1M371.5,158v2M371.5,319v2M371,360.5h1M371,362.5h1M371,377.5h1M371,414.5h1M372,55.5h1M372,102.5h1M372,119.5h1M372.5,160v2M372.5,317v2M372,359.5h1M372,363.5h1M372,376.5h1M372,415.5h1M372,423.5h1M373,103.5h1M373,118.5h1M373,120.5h1M373,162.5h1M373,316.5h1M373,358.5h1M373,364.5h1M373,375.5h1M373.5,416v2M374,104.5h1M374,117.5h1M374.5,121v2M374,163.5h1M374.5,314v2M374.5,356v2M374,365.5h1M374,374.5h1M374,418.5h1M375,57.5h1M375,105.5h1M375,116.5h1M375,123.5h1M375.5,164v2M375,313.5h1M375,355.5h1M375,366.5h1M375,373.5h1M375,419.5h1M375,421.5h1M376,58.5h1M376,106.5h1M376,124.5h1M376,167.5h1M376.5,311v2M376,354.5h1M376,367.5h1M376,372.5h1M376,420.5h1M377,107.5h1M377,125.5h1M377.5,168v2M377.5,309v2M377,353.5h1M377,368.5h1M377,371.5h1M378,108.5h1M378,114.5h1M378.5,126v2M378.5,170v2M378.5,307v2M378.5,351v2M378,370.5h1M379,60.5h1M379,109.5h1M379,113.5h1M379,128.5h1M379.5,172v2M379.5,305v2M379,350.5h1M379,418.5h1M380,61.5h1M380,110.5h1M380,112.5h1M380,129.5h1M380.5,174v2M380,304.5h1M380,368.5h1M380,417.5h1M381,62.5h1M381,111.5h1M381,130.5h1M381.5,176v2M381.5,301v2M381,348.5h1M381,367.5h1M381,416.5h1M382,112.5h1M382.5,131v2M382.5,178v2M382.5,299v2M382.5,346v2M382,350.5h1M382,366.5h1M383.5,113v2M383,130.5h1M383,133.5h1M383.5,180v3M383.5,296v3M383,345.5h1M383,351.5h1M383.5,364v2M384,64.5h1M384,115.5h1M384,134.5h1M384.5,183v2M384.5,294v2M384,344.5h1M384,352.5h1M384,363.5h1M384,414.5h1M385,65.5h1M385,116.5h1M385.5,135v2M385.5,185v4M385.5,290v4M385.5,342v2M385,362.5h1M385,413.5h1M386,66.5h1M386.5,117v2M386,128.5h1M386.5,137v2M386.5,189v4M386.5,286v4M386.5,340v2M386.5,360v2M386,412.5h1M387,67.5h1M387,119.5h1M387,127.5h1M387,139.5h1M387.5,193v3M387.5,283v3M387,339.5h1M387,354.5h1M387,359.5h1M387,411.5h1M388.5,120v2M388,140.5h1M388.5,196v4M388.5,279v4M388,338.5h1M388,355.5h1M388.5,357v2M389,122.5h1M389.5,141v2M389.5,200v4M389.5,275v4M389,336.5h1M389,356.5h1M390,69.5h1M390,123.5h1M390,143.5h1M390.5,204v2M390.5,273v2M390,335.5h1M390,355.5h1M390,409.5h1M391,70.5h1M391,144.5h1M391.5,206v4M391.5,269v4M391.5,333v2M391.5,353v2M391,408.5h1M392,71.5h1M392,126.5h1M392.5,145v2M392.5,210v11M392.5,258v11M392.5,331v2M392,352.5h1M392,407.5h1M393,72.5h1M393,123.5h1M393,127.5h1M393.5,147v2M393.5,221v5M393.5,252v6M393.5,329v2M393,351.5h1M393,406.5h1M394,73.5h1M394,128.5h1M394,142.5h1M394.5,149v2M394.5,226v13M394.5,240v12M394,328.5h1M394,350.5h1M394,405.5h1M395,74.5h1M395.5,129v2M395.5,151v2M395.5,326v2M395.5,348v2M395,404.5h1M396,75.5h1M396,121.5h1M396,131.5h1M396.5,153v2M396.5,324v2M396,347.5h1M396,403.5h1M397,76.5h1M397,120.5h1M397,132.5h1M397,140.5h1M397,155.5h1M397,322.5h1M397,346.5h1M397,402.5h1M398,77.5h1M398.5,133v2M398,157.5h1M398.5,320v2M398.5,344v2M398,401.5h1M399,78.5h1M399,135.5h1M399.5,158v2M399.5,318v2M399,343.5h1M399,400.5h1M400,79.5h1M400,118.5h1M400.5,136v2M400.5,160v3M400.5,316v2M400,341.5h1M400,399.5h1M401,80.5h1M401,117.5h1M401.5,163v2M401.5,314v2M401.5,339v2M401,398.5h1M402,81.5h1M402,116.5h1M402.5,139v2M402.5,165v2M402.5,311v2M402.5,337v2M402,397.5h1M403,82.5h1M403.5,141v2M403.5,167v2M403.5,309v2M403.5,335v2M403,396.5h1M404,83.5h1M404.5,143v2M404.5,169v2M404.5,307v2M404,334.5h1M404,395.5h1M405,84.5h1M405,114.5h1M405.5,145v2M405,171.5h1M405,173.5h1M405.5,305v2M405.5,332v2M405,394.5h1M406,85.5h1M406,113.5h1M406,147.5h1M406.5,174v3M406.5,302v3M406,331.5h1M406,393.5h1M407,86.5h1M407.5,148v2M407.5,177v3M407.5,299v3M407.5,329v2M407,392.5h1M408,87.5h1M408,150.5h1M408.5,180v3M408.5,296v3M408,327.5h1M408,391.5h1M409,88.5h1M409,111.5h1M409.5,151v2M409.5,183v3M409,293.5h1M409,295.5h1M409.5,325v2M409,390.5h1M410,89.5h1M410,110.5h1M410,154.5h1M410,186.5h1M410,188.5h1M410.5,290v3M410.5,323v2M410.5,388v2M411.5,90v2M411,109.5h1M411.5,155v3M411.5,189v3M411.5,287v3M411.5,321v2M411,387.5h1M412,92.5h1M412.5,158v3M412.5,192v3M412.5,284v3M412.5,318v3M412,386.5h1M413,93.5h1M413.5,161v2M413.5,195v4M413.5,280v4M413.5,315v3M413,385.5h1M414,94.5h1M414,107.5h1M414.5,163v2M414.5,199v3M414.5,203v2M414.5,273v6M414,314.5h1M414,384.5h1M415,95.5h1M415,106.5h1M415.5,165v2M415.5,205v7M415.5,267v6M415.5,311v2M415.5,382v2M416.5,96v2M416,167.5h1M416,169.5h1M416.5,212v5M416.5,260v3M416.5,264v3M416.5,309v2M416,381.5h1M417,98.5h1M417.5,170v3M417.5,218v6M417.5,254v6M417.5,306v3M417,380.5h1M418,99.5h1M418,104.5h1M418.5,173v2M418.5,224v9M418.5,234v5M418.5,240v8M418.5,249v5M418.5,303v3M418,379.5h1M419.5,100v2M419,103.5h1M419.5,175v2M419.5,301v2M419.5,377v2M420,102.5h1M420.5,177v2M420.5,299v2M420,376.5h1M421,103.5h1M421.5,179v3M421,298.5h1M421,375.5h1M422.5,104v2M422.5,182v2M422,185.5h1M422.5,293v4M422.5,373v2M423,106.5h1M423.5,186v4M423.5,288v5M423,372.5h1M424.5,107v2M424.5,190v5M424.5,284v4M424.5,370v2M425,109.5h1M425.5,195v4M425,280.5h1M425.5,282v2M425,369.5h1M426.5,110v2M426,199.5h1M426.5,201v2M426.5,275v5M426.5,367v2M427,112.5h1M427.5,203v7M427.5,269v6M427,366.5h1M428.5,113v2M428.5,210v6M428.5,262v3M428.5,266v3M428.5,364v2M429.5,115v2M429.5,217v6M429.5,256v6M429.5,362v2M430.5,117v2M430.5,223v10M430.5,234v14M430.5,249v7M430.5,360v2M431,119.5h1M431,359.5h1M432.5,120v2M432.5,357v2M433,122.5h1M433,356.5h1M434,123.5h1M434,355.5h1M435.5,124v2M435.5,353v2M436.5,126v2M436.5,351v2M437.5,128v2M437.5,349v2M438.5,130v2M438.5,347v2M439.5,132v2M439.5,345v2M440.5,134v2M440.5,343v2M441.5,136v2M441.5,341v2M442.5,138v2M442.5,339v2M443.5,140v2M443.5,337v2M444.5,142v2M444.5,335v2M445.5,144v2M445.5,333v2M446.5,146v3M446.5,330v3M447.5,149v2M447.5,328v2M448.5,151v2M448,326.5h1M449.5,153v3M449.5,323v3M450.5,156v2M450.5,320v3M451.5,158v3M451.5,318v2M452.5,161v3M452.5,315v3M453.5,164v2M453.5,313v2M454.5,166v2M454.5,311v2M455.5,168v3M455.5,307v4M456.5,171v4M456.5,303v4M457.5,175v4M457.5,300v3M458.5,179v4M458.5,296v4M459.5,183v3M459.5,292v4M460.5,186v4M460.5,288v4M461.5,190v4M461.5,284v4M462.5,194v4M462.5,280v4M463.5,198v6M463.5,274v6M464.5,204v8M464.5,266v8M465.5,213v15M465.5,250v16M466.5,228v22"/><path stroke="#808080" d="M108,109.5h2M372,110.5h2M106,111.5h2M374,112.5h2M101,116.5h2M380,116.5h2M99,118.5h2M383,118.5h2M376,119.5h2M97,121.5h2M379,121.5h2M383,122.5h2M95,123.5h2M387,123.5h2M384,125.5h2M89,127.5h2M381,127.5h2M391,128.5h2M87,129.5h2M93,130.5h2M388,130.5h2M84,131.5h2M393,131.5h2M91,132.5h2M385,132.5h2M87,133.5h2M390,133.5h2M82,134.5h2M395,134.5h2M90,135.5h2M387,135.5h2M85,136.5h2M392,136.5h2M397,136.5h2M88,138.5h2M389,138.5h2M394,138.5h2M78,139.5h2M80,140.5h2M391,140.5h2M77,142.5h2M83,142.5h2M400,142.5h2M85,143.5h2M80,144.5h2M397,144.5h2M75,145.5h2M402,145.5h2M77,146.5h2M83,146.5h2M394,146.5h2M400,146.5h2M79,147.5h2M398,147.5h2M73,148.5h2M81,148.5h2M396,148.5h2M403,148.5h2M75,149.5h2M401,149.5h2M77,150.5h2M399,150.5h2M79,151.5h2M397,151.5h2M405,151.5h2M81,152.5h2M403,152.5h2M401,153.5h2M70,154.5h2M399,154.5h2M72,155.5h2M74,156.5h2M409,156.5h2M69,157.5h2M76,157.5h2M407,157.5h2M71,158.5h2M404,158.5h3M73,159.5h2M402,159.5h2M410,159.5h2M68,160.5h2M75,160.5h2M408,160.5h2M70,161.5h3M406,161.5h2M73,162.5h2M404,162.5h2M67,163.5h2M75,163.5h2M402,163.5h2M410,163.5h2M69,164.5h3M407,164.5h3M72,165.5h2M405,165.5h2M413,165.5h2M74,166.5h2M403,166.5h2M411,166.5h2M408,167.5h3M406,168.5h2M64,169.5h2M66,170.5h3M69,171.5h2M63,172.5h2M71,172.5h2M414,172.5h2M65,173.5h3M411,173.5h3M68,174.5h2M409,174.5h2M62,175.5h2M70,175.5h2M407,175.5h2M415,175.5h2M64,176.5h3M412,176.5h3M59,177.5h2M67,177.5h2M410,177.5h2M418,177.5h2M61,178.5h2M69,178.5h2M408,178.5h2M416,178.5h2M63,179.5h3M413,179.5h3M66,180.5h2M411,180.5h2M419,180.5h2M68,181.5h2M409,181.5h2M417,181.5h2M414,182.5h3M412,183.5h2M57,184.5h2M410,184.5h2M59,185.5h3M62,186.5h4M56,187.5h2M66,187.5h2M421,187.5h2M58,188.5h3M417,188.5h4M61,189.5h4M414,189.5h3M55,190.5h2M65,190.5h2M412,190.5h2M422,190.5h2M57,191.5h3M418,191.5h4M60,192.5h4M415,192.5h3M64,193.5h2M413,193.5h2M56,194.5h4M419,194.5h4M60,195.5h4M415,195.5h4M420,197.5h4M416,198.5h4M53,200.5h3M56,201.5h5M61,202.5h3M52,203.5h3M424,203.5h3M55,204.5h5M418,204.5h6M60,205.5h3M416,205.5h2M425,206.5h2M52,207.5h5M419,207.5h6M57,208.5h6M416,208.5h3M425,209.5h2M51,210.5h5M420,210.5h5M56,211.5h6M417,211.5h3M423,213.5h5M417,214.5h6M50,216.5h3M53,217.5h6M59,218.5h2M423,219.5h6M50,220.5h5M418,220.5h5M55,221.5h6M49,223.5h6M424,223.5h6M55,224.5h5M419,224.5h5M49,226.5h6M424,226.5h6M55,227.5h5M419,227.5h5M424,229.5h6M419,230.5h5M49,233.5h11M49,236.5h5M419,236.5h11M54,237.5h6M49,239.5h11M419,239.5h11M419,241.5h5M49,242.5h11M424,242.5h6M419,245.5h11M54,248.5h6M49,249.5h5M55,251.5h5M419,251.5h5M49,252.5h6M424,252.5h6M55,254.5h6M418,254.5h6M49,255.5h6M424,255.5h6M418,257.5h5M55,258.5h6M423,258.5h6M50,259.5h5M417,260.5h3M420,261.5h6M426,262.5h2M56,264.5h6M51,265.5h5M59,267.5h3M417,267.5h5M54,268.5h5M422,268.5h6M52,269.5h2M60,270.5h3M416,270.5h6M54,271.5h6M422,271.5h5M52,272.5h2M61,273.5h3M416,273.5h3M55,274.5h6M419,274.5h5M53,275.5h2M424,275.5h2M415,276.5h3M418,277.5h5M423,278.5h3M63,279.5h2M59,280.5h4M55,281.5h4M60,283.5h4M415,283.5h4M56,284.5h4M419,284.5h4M64,285.5h2M413,285.5h2M60,286.5h4M415,286.5h3M57,287.5h3M418,287.5h4M65,288.5h2M412,288.5h2M61,289.5h4M414,289.5h3M58,290.5h3M417,290.5h4M56,291.5h2M411,291.5h2M421,291.5h2M413,292.5h3M416,293.5h4M67,294.5h2M420,294.5h2M65,295.5h2M62,296.5h3M60,297.5h2M68,297.5h2M409,297.5h2M58,298.5h2M66,298.5h2M411,298.5h2M63,299.5h3M413,299.5h3M61,300.5h2M69,300.5h2M408,300.5h2M416,300.5h2M67,301.5h2M410,301.5h2M64,302.5h3M412,302.5h3M62,303.5h2M70,303.5h2M407,303.5h2M415,303.5h2M68,304.5h2M409,304.5h2M65,305.5h3M411,305.5h3M63,306.5h2M406,306.5h2M414,306.5h2M408,307.5h2M410,308.5h3M73,309.5h2M413,309.5h2M71,310.5h2M68,311.5h3M66,312.5h2M74,312.5h2M403,312.5h2M72,313.5h2M405,313.5h2M69,314.5h3M407,314.5h3M67,315.5h2M75,315.5h2M402,315.5h2M410,315.5h2M73,316.5h2M404,316.5h2M71,317.5h2M406,317.5h3M69,318.5h2M77,318.5h2M402,318.5h2M409,318.5h2M67,319.5h2M75,319.5h2M404,319.5h2M72,320.5h3M406,320.5h2M70,321.5h2M400,321.5h2M408,321.5h2M68,322.5h2M402,322.5h2M404,323.5h2M78,324.5h2M406,324.5h2M76,325.5h2M74,326.5h2M72,327.5h2M80,327.5h2M397,327.5h2M78,328.5h2M399,328.5h2M76,329.5h2M401,329.5h2M74,330.5h2M81,330.5h2M396,330.5h2M403,330.5h2M79,331.5h2M398,331.5h2M77,332.5h2M83,332.5h2M394,332.5h2M400,332.5h2M75,333.5h2M402,333.5h2M80,334.5h2M397,334.5h2M392,335.5h2M77,336.5h2M394,336.5h2M400,336.5h2M86,338.5h2M397,338.5h2M399,339.5h2M83,340.5h2M88,340.5h2M389,340.5h2M80,342.5h2M85,342.5h2M392,342.5h2M90,343.5h2M387,343.5h2M82,344.5h2M395,344.5h2M87,345.5h2M390,345.5h2M92,346.5h2M386,346.5h2M84,347.5h2M393,347.5h2M89,348.5h2M385,349.5h2M390,349.5h2M86,350.5h2M96,351.5h2M389,352.5h2M93,353.5h2M90,355.5h2M95,355.5h2M99,356.5h2M383,356.5h2M381,358.5h2M95,359.5h2M101,359.5h2M379,361.5h2M97,362.5h2M377,363.5h2M104,365.5h2M106,367.5h2M372,368.5h2M370,370.5h2M54,282.5h1M55,193.5h1M55,285.5h1M56,288.5h1M60,301.5h1M61,174.5h1M61,304.5h1M62,171.5h1M62,307.5h1M63,168.5h1M64,196.5h1M64,282.5h1M65,313.5h1M66,162.5h1M66,316.5h1M67,159.5h1M68,156.5h1M69,153.5h1M71,328.5h1M73,331.5h1M76,141.5h1M77,161.5h1M78,158.5h1M79,143.5h1M79,335.5h1M80,323.5h1M81,133.5h1M81,345.5h1M82,141.5h1M82,145.5h1M82,326.5h1M82,333.5h1M82,341.5h1M83,149.5h1M83,329.5h1M84,135.5h1M84,343.5h1M85,331.5h1M85,339.5h1M86,128.5h1M86,132.5h1M86,346.5h1M87,137.5h1M87,341.5h1M88,126.5h1M88,337.5h1M88,349.5h1M89,130.5h1M89,134.5h1M89,344.5h1M90,131.5h1M90,139.5h1M90,339.5h1M91,128.5h1M91,347.5h1M92,120.5h1M92,129.5h1M92,136.5h1M92,342.5h1M92,354.5h1M92,358.5h1M93,117.5h1M93,121.5h1M93,133.5h1M93,357.5h1M93,361.5h1M94,118.5h1M94,122.5h1M94,345.5h1M94,356.5h1M94,360.5h1M95,119.5h1M95,131.5h1M95,352.5h1M96,115.5h1M96,120.5h1M96,363.5h1M97,112.5h1M97,116.5h1M97,124.5h1M97,354.5h1M97,358.5h1M98,113.5h1M98,117.5h1M98,125.5h1M98,350.5h1M98,353.5h1M98,357.5h1M99,114.5h1M99,122.5h1M99,126.5h1M99,175.5h1M99,352.5h1M99,361.5h1M100,115.5h1M100,123.5h1M100,360.5h1M100,369.5h1M101,119.5h1M101,124.5h1M101,176.5h1M101,355.5h1M101,368.5h1M102,107.5h1M102,120.5h1M102,367.5h1M102,371.5h1M103,108.5h1M103,117.5h1M103,121.5h1M103,177.5h1M103,310.5h1M103,358.5h1M103,366.5h1M103,370.5h1M104,105.5h1M104,109.5h1M104,118.5h1M104,369.5h1M105,106.5h1M105,110.5h1M105,119.5h1M105,178.5h1M105,309.5h1M105,368.5h1M105,374.5h1M106,107.5h1M106,364.5h1M106,373.5h1M107,102.5h1M107,108.5h1M107,179.5h1M107,308.5h1M107,363.5h1M107,372.5h1M107,376.5h1M108,103.5h1M108,112.5h1M108,362.5h1M108,366.5h1M108.5,370v2M108,375.5h1M109,100.5h1M109,104.5h1M109,113.5h1M109,180.5h1M109,307.5h1M109,365.5h1M109,369.5h1M109,374.5h1M110,101.5h1M110,105.5h1M110,110.5h1M110,114.5h1M110,364.5h1M110,368.5h1M110.5,372v2M111,102.5h1M111.5,106v2M111,111.5h1M111,181.5h1M111,306.5h1M111,367.5h1M111,371.5h1M112,103.5h1M112,108.5h1M112,112.5h1M112,366.5h1M112,370.5h1M112,381.5h1M113.5,104v2M113,109.5h1M113,182.5h1M113,305.5h1M113,369.5h1M113,380.5h1M114,106.5h1M114,110.5h1M114,368.5h1M114,379.5h1M115,96.5h1M115,107.5h1M115,183.5h1M115,304.5h1M115.5,377v2M115,382.5h1M116.5,97v2M116,108.5h1M116,376.5h1M116,381.5h1M117,93.5h1M117,99.5h1M117,184.5h1M117,303.5h1M117,375.5h1M117.5,379v2M117,385.5h1M118,94.5h1M118,100.5h1M118,374.5h1M118,378.5h1M118,384.5h1M119.5,95v2M119.5,101v2M119,185.5h1M119,302.5h1M119,373.5h1M119,377.5h1M119,383.5h1M120,92.5h1M120,97.5h1M120,103.5h1M120,376.5h1M120.5,381v2M120,386.5h1M121,93.5h1M121,98.5h1M121,185.5h1M121,301.5h1M121,375.5h1M121,380.5h1M121,385.5h1M122,94.5h1M122.5,99v2M122,379.5h1M122.5,383v2M123.5,90v2M123.5,95v2M123,101.5h1M123,186.5h1M123,300.5h1M123,378.5h1M123,382.5h1M124,92.5h1M124,97.5h1M124,377.5h1M124,381.5h1M125.5,93v2M125,98.5h1M125,187.5h1M125,299.5h1M125,380.5h1M126,95.5h1M126,99.5h1M126,379.5h1M126.5,389v2M127.5,96v2M127,188.5h1M127,298.5h1M127,388.5h1M128.5,86v2M128,98.5h1M128,387.5h1M128,392.5h1M129,88.5h1M129,189.5h1M129,297.5h1M129.5,385v2M129.5,390v2M130.5,89v2M130,384.5h1M130,389.5h1M131.5,84v2M131,91.5h1M131,190.5h1M131,296.5h1M131,383.5h1M131,388.5h1M131.5,393v2M132,86.5h1M132.5,92v2M132.5,386v2M132,392.5h1M133,81.5h1M133.5,87v2M133,94.5h1M133,191.5h1M133,295.5h1M133,385.5h1M133.5,390v2M133,397.5h1M134.5,82v2M134,89.5h1M134,389.5h1M134.5,395v2M135,84.5h1M135.5,90v2M135,192.5h1M135,294.5h1M135.5,387v2M135,394.5h1M136.5,80v2M136.5,85v2M136,92.5h1M136,386.5h1M136.5,392v2M137,82.5h1M137,87.5h1M137,193.5h1M137,293.5h1M137,391.5h1M138.5,83v2M138.5,88v2M138.5,389v2M139,85.5h1M139,90.5h1M139,194.5h1M139,292.5h1M139,388.5h1M139.5,399v2M140.5,86v2M140.5,397v2M141,76.5h1M141,88.5h1M141,195.5h1M141,291.5h1M141,396.5h1M141,402.5h1M142.5,77v2M142.5,394v2M142.5,400v2M143,79.5h1M143,195.5h1M143,289.5h1M143.5,392v2M143,399.5h1M144.5,80v2M144.5,397v2M145.5,75v2M145,82.5h1M145,196.5h1M145,288.5h1M145,396.5h1M145.5,402v2M146.5,77v2M146.5,83v2M146.5,394v2M146.5,400v2M147,73.5h1M147.5,79v2M147,115.5h1M147,197.5h1M147,287.5h1M147.5,398v2M147,405.5h1M148.5,74v2M148.5,81v2M148,117.5h1M148.5,396v2M148.5,403v2M149.5,76v2M149,83.5h1M149,198.5h1M149,286.5h1M149,395.5h1M149.5,401v2M150,71.5h1M150.5,78v2M150,119.5h1M150.5,399v2M151.5,72v2M151.5,80v2M151,121.5h1M151,199.5h1M151,285.5h1M151.5,397v2M152.5,74v2M152,82.5h1M152,396.5h1M153.5,76v2M153,123.5h1M153,200.5h1M153,284.5h1M153.5,408v2M154.5,78v2M154,125.5h1M154.5,406v2M155,80.5h1M155,201.5h1M155,283.5h1M155.5,404v2M156.5,68v2M156,127.5h1M156.5,402v2M156,410.5h1M157.5,70v2M157,129.5h1M157,202.5h1M157,282.5h1M157.5,400v2M157.5,408v2M158.5,72v3M158.5,406v2M159.5,67v2M159.5,75v2M159,131.5h1M159,203.5h1M159,281.5h1M159.5,404v2M159,411.5h1M160.5,69v2M160,77.5h1M160,133.5h1M160.5,402v2M160.5,409v2M161.5,71v2M161,204.5h1M161,280.5h1M161,401.5h1M161.5,406v3M162,66.5h1M162.5,73v2M162,135.5h1M162,371.5h1M162.5,404v2M162,412.5h1M163.5,67v2M163.5,75v2M163,137.5h1M163,205.5h1M163,279.5h1M163,369.5h1M163.5,402v2M163.5,410v2M164.5,69v3M164,367.5h1M164.5,407v3M165.5,64v2M165.5,72v2M165,139.5h1M165,205.5h1M165,278.5h1M165,365.5h1M165.5,405v2M166.5,66v2M166.5,74v2M166,141.5h1M166,363.5h1M166.5,403v2M167.5,68v3M167,206.5h1M167,277.5h1M167,361.5h1M168.5,71v2M168,143.5h1M168,415.5h1M169,73.5h1M169,145.5h1M169,207.5h1M169,276.5h1M169,359.5h1M169.5,413v2M170,357.5h1M170.5,410v3M171,62.5h1M171,147.5h1M171,208.5h1M171,275.5h1M171,355.5h1M171.5,408v2M171,416.5h1M172.5,63v2M172,149.5h1M172,353.5h1M172.5,406v2M172.5,414v2M173.5,65v3M173,209.5h1M173,274.5h1M173,351.5h1M173.5,411v3M174,61.5h1M174.5,68v2M174,151.5h1M174,349.5h1M174.5,409v2M174,417.5h1M175.5,62v2M175.5,70v2M175,153.5h1M175,210.5h1M175,273.5h1M175.5,407v2M175.5,415v2M176.5,64v3M176,347.5h1M176.5,412v3M177.5,59v2M177.5,67v2M177,155.5h1M177,211.5h1M177,272.5h1M177,345.5h1M177.5,410v2M177.5,418v2M178.5,61v2M178.5,69v2M178,157.5h1M178,343.5h1M178.5,408v2M178.5,416v2M179.5,63v3M179,212.5h1M179,271.5h1M179,341.5h1M179.5,413v3M180.5,58v2M180.5,66v2M180,159.5h1M180,339.5h1M180.5,411v2M181.5,60v2M181.5,68v2M181,161.5h1M181,213.5h1M181,269.5h1M181.5,409v2M182.5,62v3M182,337.5h1M183.5,65v2M183,163.5h1M183,214.5h1M183,268.5h1M183,335.5h1M184.5,67v2M184,165.5h1M184,333.5h1M184.5,420v2M185,214.5h1M185,267.5h1M185,331.5h1M185.5,416v4M186,167.5h1M186,329.5h1M186.5,413v3M187.5,56v2M187,169.5h1M187,215.5h1M187,266.5h1M187,327.5h1M187.5,411v2M187.5,421v2M188.5,58v3M188.5,417v4M189.5,61v4M189,171.5h1M189,216.5h1M189,265.5h1M189,325.5h1M189.5,414v3M190.5,55v2M190.5,65v2M190,173.5h1M190,323.5h1M190.5,412v2M190.5,422v2M191.5,57v3M191,217.5h1M191,264.5h1M191,321.5h1M191.5,418v4M192.5,60v4M192,175.5h1M192,319.5h1M192.5,415v3M193,55.5h1M193.5,64v2M193,177.5h1M193,218.5h1M193,263.5h1M193,317.5h1M193.5,413v2M193,423.5h1M194.5,56v4M194,179.5h1M194,315.5h1M194.5,419v4M195.5,60v4M195,219.5h1M195,262.5h1M195.5,415v4M196,54.5h1M196,64.5h1M196,181.5h1M196,313.5h1M196,414.5h1M197.5,55v4M197,183.5h1M197,220.5h1M197,261.5h1M197,311.5h1M198.5,59v4M198,309.5h1M199,63.5h1M199,185.5h1M199,221.5h1M199,260.5h1M199,307.5h1M200,187.5h1M200,305.5h1M200.5,423v3M201,222.5h1M201,259.5h1M201,303.5h1M201.5,418v5M202,189.5h1M202.5,415v3M203.5,52v3M203,191.5h1M203,223.5h1M203,258.5h1M203,301.5h1M203.5,424v3M204.5,55v6M204,299.5h1M204.5,419v5M205.5,61v2M205,193.5h1M205,224.5h1M205,257.5h1M205,297.5h1M205.5,416v3M206.5,52v2M206,195.5h1M206,295.5h1M207.5,54v6M207,224.5h1M207,256.5h1M207,293.5h1M207.5,422v5M208.5,60v3M208,197.5h1M208.5,416v6M209.5,52v2M209,199.5h1M209,225.5h1M209,255.5h1M209,291.5h1M210.5,54v5M210,289.5h1M210.5,422v6M211.5,59v3M211,201.5h1M211,226.5h1M211,254.5h1M211,287.5h1M211.5,417v5M212,203.5h1M212,285.5h1M213.5,51v5M213,227.5h1M213,253.5h1M213,283.5h1M214.5,56v6M214,205.5h1M214,281.5h1M215,207.5h1M215,228.5h1M215,252.5h1M216,279.5h1M216.5,426v3M217,209.5h1M217,229.5h1M217,251.5h1M217,277.5h1M217.5,420v6M218,211.5h1M218,275.5h1M218.5,418v2M219.5,50v5M219,230.5h1M219,250.5h1M219,273.5h1M220.5,55v6M220,213.5h1M220,271.5h1M220.5,423v6M221,215.5h1M221,231.5h1M221,248.5h1M221,269.5h1M221.5,418v5M223.5,49v6M223,217.5h1M223,232.5h1M223,247.5h1M223,267.5h1M223.5,424v6M224.5,55v5M224,219.5h1M224,265.5h1M224.5,419v5M225,233.5h1M225,246.5h1M225,263.5h1M226.5,49v6M226,221.5h1M226,261.5h1M226.5,424v6M227.5,55v5M227,223.5h1M227,234.5h1M227,245.5h1M227,259.5h1M227.5,419v5M228,257.5h1M229.5,49v5M229,225.5h1M229,234.5h1M229,244.5h1M230.5,54v6M230,227.5h1M230,255.5h1M231,235.5h1M231,243.5h1M231,253.5h1M232,229.5h1M232,251.5h1M233,231.5h1M233,236.5h1M233,242.5h1M233,249.5h1M233.5,419v11M234,247.5h1M235,233.5h1M235,237.5h1M235,241.5h1M235,245.5h1M236.5,49v11M236,235.5h1M236.5,424v6M237,238.5h1M237,240.5h1M237,243.5h1M237.5,419v5M238,237.5h1M238,241.5h1M239.5,49v11M239,239.5h1M239.5,419v11M240,237.5h1M240,241.5h1M241.5,54v6M241,235.5h1M241,238.5h1M241,240.5h1M242.5,49v5M242,243.5h1M242.5,419v11M243,233.5h1M243,237.5h1M243,241.5h1M243,245.5h1M244,231.5h1M245.5,49v11M245,229.5h1M245,236.5h1M245,242.5h1M245,247.5h1M246,227.5h1M246,249.5h1M247,225.5h1M247,235.5h1M247,243.5h1M248,223.5h1M248,251.5h1M248.5,419v5M249,234.5h1M249,244.5h1M249,253.5h1M249.5,424v6M250,221.5h1M251.5,55v5M251,219.5h1M251,233.5h1M251,244.5h1M251,255.5h1M251.5,419v5M252.5,49v6M252,217.5h1M252,257.5h1M252.5,424v6M253,215.5h1M253,232.5h1M253,245.5h1M254.5,55v6M254,213.5h1M254,259.5h1M254.5,418v6M255.5,49v6M255.5,114v3M255,211.5h1M255,231.5h1M255,246.5h1M255,261.5h1M255.5,424v6M256.5,109v5M257.5,55v6M257.5,106v3M257,209.5h1M257,230.5h1M257,247.5h1M257,263.5h1M258.5,50v5M258,207.5h1M258,265.5h1M258.5,418v5M259,205.5h1M259,228.5h1M259,248.5h1M259.5,423v6M260.5,59v3M260,203.5h1M260,267.5h1M261.5,53v6M261,201.5h1M261,227.5h1M261,249.5h1M261,269.5h1M262.5,51v2M262,199.5h1M263,226.5h1M263,250.5h1M263,271.5h1M264,197.5h1M264,273.5h1M264.5,417v6M265,195.5h1M265,225.5h1M265,251.5h1M265.5,423v5M266,193.5h1M266,275.5h1M267.5,56v6M267,191.5h1M267,224.5h1M267,252.5h1M267,277.5h1M267.5,417v3M268.5,51v5M268,189.5h1M268.5,420v5M269,187.5h1M269,223.5h1M269,253.5h1M269,279.5h1M269.5,425v2M270.5,57v6M270,281.5h1M270.5,416v3M271.5,52v5M271,185.5h1M271,222.5h1M271,254.5h1M271.5,419v6M272,183.5h1M272,283.5h1M272.5,425v2M273.5,60v3M273,181.5h1M273,221.5h1M273,254.5h1M273,285.5h1M273.5,415v3M274.5,55v5M274.5,418v6M275.5,53v2M275,177.5h1M275,220.5h1M275,255.5h1M275,287.5h1M275.5,424v2M276.5,61v3M276,289.5h1M277.5,56v5M277,175.5h1M277,219.5h1M277,256.5h1M278.5,53v3M278,173.5h1M278,291.5h1M279,171.5h1M279,218.5h1M279,257.5h1M279,293.5h1M279.5,414v2M280,169.5h1M280.5,416v4M281,167.5h1M281,217.5h1M281,258.5h1M281,295.5h1M281.5,420v4M282,64.5h1M282,165.5h1M282,297.5h1M282,414.5h1M282,424.5h1M283.5,60v4M283,216.5h1M283,259.5h1M283.5,415v4M284.5,56v4M284,163.5h1M284,299.5h1M284.5,419v4M285,55.5h1M285.5,64v2M285,161.5h1M285,215.5h1M285,260.5h1M285,301.5h1M285.5,413v2M285,423.5h1M286.5,60v4M286,159.5h1M286,303.5h1M286.5,415v3M287.5,57v3M287,157.5h1M287,214.5h1M287,261.5h1M287.5,418v4M288,56.5h1M288.5,65v2M288,155.5h1M288,305.5h1M288.5,412v2M288,422.5h1M289.5,61v4M289,153.5h1M289,213.5h1M289,262.5h1M289,307.5h1M289.5,414v3M290.5,58v3M290.5,417v4M291.5,56v2M291.5,66v2M291,151.5h1M291,212.5h1M291,263.5h1M291,309.5h1M291.5,421v2M292.5,62v4M292,149.5h1M292,311.5h1M293.5,59v3M293,147.5h1M293,211.5h1M293,264.5h1M294.5,57v2M294,145.5h1M294,313.5h1M294.5,410v2M295,143.5h1M295,210.5h1M295,264.5h1M295,315.5h1M295.5,412v2M296,141.5h1M296.5,414v3M297.5,68v2M297,209.5h1M297,265.5h1M297,317.5h1M297.5,409v2M297.5,417v2M298.5,66v2M298,139.5h1M298,319.5h1M298.5,411v2M298.5,419v2M299.5,63v3M299,137.5h1M299,207.5h1M299,266.5h1M299.5,413v3M300.5,61v2M300.5,69v2M300,135.5h1M300,321.5h1M300.5,408v2M300.5,416v2M301,60.5h1M301.5,67v2M301,133.5h1M301,206.5h1M301,267.5h1M301,323.5h1M301.5,410v2M301,418.5h1M302.5,64v3M302,131.5h1M302.5,412v3M303.5,62v2M303.5,70v2M303,205.5h1M303,268.5h1M303,325.5h1M303.5,407v2M303.5,415v2M304,61.5h1M304.5,68v2M304,129.5h1M304,327.5h1M304.5,409v2M304,417.5h1M305.5,65v3M305,127.5h1M305,204.5h1M305,269.5h1M305.5,411v3M306.5,63v2M306.5,71v2M306,125.5h1M306,329.5h1M306.5,414v2M307,62.5h1M307.5,69v2M307,123.5h1M307,203.5h1M307,270.5h1M307,331.5h1M307,416.5h1M308.5,66v3M308,121.5h1M309.5,64v2M309,119.5h1M309,202.5h1M309,271.5h1M309,333.5h1M309.5,404v2M310,63.5h1M310,335.5h1M310.5,406v2M311,117.5h1M311,201.5h1M311,272.5h1M311.5,408v3M312.5,74v2M312,115.5h1M312,337.5h1M312.5,403v2M312.5,411v2M313.5,72v2M313,113.5h1M313,200.5h1M313,273.5h1M313,339.5h1M313.5,405v2M313,413.5h1M314.5,69v3M314,111.5h1M314.5,407v3M315.5,67v2M315.5,75v2M315,109.5h1M315,199.5h1M315,273.5h1M315,341.5h1M315.5,402v2M315.5,410v2M316,66.5h1M316.5,73v2M316,107.5h1M316,343.5h1M316.5,404v2M316,412.5h1M317.5,70v3M317,77.5h1M317,198.5h1M317,274.5h1M317.5,406v2M318.5,68v2M318.5,75v2M318,345.5h1M318.5,400v2M318.5,408v2M319,67.5h1M319.5,73v2M319,197.5h1M319,275.5h1M319,347.5h1M319.5,402v2M319.5,410v2M320.5,71v2M320.5,78v2M320.5,404v3M321.5,69v2M321.5,76v2M321,196.5h1M321,276.5h1M321,349.5h1M321.5,407v2M322,68.5h1M322.5,74v2M322,351.5h1M322.5,409v2M323.5,72v2M323,195.5h1M323,277.5h1M323,398.5h1M324.5,70v2M324,353.5h1M324.5,399v2M325,278.5h1M325,355.5h1M325.5,401v2M326.5,81v2M326,396.5h1M326.5,403v2M327.5,79v2M327,193.5h1M327,279.5h1M327,357.5h1M327.5,397v2M327.5,405v2M328.5,77v2M328,359.5h1M328.5,399v2M328,407.5h1M329.5,75v2M329,83.5h1M329,192.5h1M329,280.5h1M329,395.5h1M329.5,401v2M330.5,73v2M330.5,81v2M330,361.5h1M330.5,396v2M330.5,403v2M331.5,79v2M331,85.5h1M331,191.5h1M331,281.5h1M331,363.5h1M331,393.5h1M331.5,398v2M331,405.5h1M332.5,77v2M332.5,83v2M332.5,394v2M332.5,400v2M333.5,75v2M333,82.5h1M333,190.5h1M333,282.5h1M333,396.5h1M333.5,402v2M334.5,80v2M334.5,397v2M335,79.5h1M335.5,85v2M335,283.5h1M335,399.5h1M336.5,77v2M336.5,83v2M336.5,400v2M337,82.5h1M337,187.5h1M337,283.5h1M337,390.5h1M338.5,80v2M338.5,391v2M339.5,78v2M339,90.5h1M339,186.5h1M339,284.5h1M339,388.5h1M339,393.5h1M340.5,88v2M340.5,389v2M340.5,394v2M341,87.5h1M341,185.5h1M341,285.5h1M341,391.5h1M341,396.5h1M342.5,85v2M342,92.5h1M342,386.5h1M342.5,392v2M342.5,397v2M343,84.5h1M343.5,90v2M343,184.5h1M343,286.5h1M343.5,387v2M343,394.5h1M344.5,82v2M344,89.5h1M344,389.5h1M344.5,395v2M345,81.5h1M345.5,87v2M345,93.5h1M345,183.5h1M345,287.5h1M345,384.5h1M345.5,390v2M345,397.5h1M346,86.5h1M346.5,91v2M346.5,303v17M346.5,385v2M346,392.5h1M347.5,84v2M347,90.5h1M347,95.5h1M347,182.5h1M347,288.5h1M347,387.5h1M347.5,393v2M348,89.5h1M348.5,93v2M348.5,388v2M349.5,87v2M349,92.5h1M349,181.5h1M349,289.5h1M349,390.5h1M350,86.5h1M350,91.5h1M350,380.5h1M350.5,391v2M351.5,89v2M351,180.5h1M351,290.5h1M351.5,381v2M352,88.5h1M352,99.5h1M352,379.5h1M352,383.5h1M353,98.5h1M353,179.5h1M353,291.5h1M353,380.5h1M353.5,384v2M354,97.5h1M354,101.5h1M354,381.5h1M354,386.5h1M355.5,95v2M355,100.5h1M355,178.5h1M355,292.5h1M355,377.5h1M355,382.5h1M355.5,387v2M356,94.5h1M356,99.5h1M356,378.5h1M356.5,383v2M357,93.5h1M357.5,97v2M357,103.5h1M357,177.5h1M357,293.5h1M357.5,379v2M357,385.5h1M358,92.5h1M358,96.5h1M358,102.5h1M358,375.5h1M358,381.5h1M358,386.5h1M359,95.5h1M359,101.5h1M359,105.5h1M359,176.5h1M359,293.5h1M359.5,376v2M359,382.5h1M360,94.5h1M360.5,99v2M360,104.5h1M360,378.5h1M360.5,383v2M361,93.5h1M361,98.5h1M361,103.5h1M361,175.5h1M361,294.5h1M361,379.5h1M361,385.5h1M362,97.5h1M362.5,101v2M362,370.5h1M362.5,380v2M363,96.5h1M363,100.5h1M363,174.5h1M363,295.5h1M363,371.5h1M363,382.5h1M364,99.5h1M364,110.5h1M364,368.5h1M364,372.5h1M365,98.5h1M365,109.5h1M365,173.5h1M365,296.5h1M365,369.5h1M365,373.5h1M366,97.5h1M366,108.5h1M366,112.5h1M366,366.5h1M366,370.5h1M366.5,374v2M367.5,106v2M367,111.5h1M367,172.5h1M367,297.5h1M367,367.5h1M367,371.5h1M367,376.5h1M368,105.5h1M368,110.5h1M368,114.5h1M368,364.5h1M368,368.5h1M368.5,372v2M368,377.5h1M369,104.5h1M369.5,108v2M369,113.5h1M369,171.5h1M369,298.5h1M369,365.5h1M369,369.5h1M369,374.5h1M369,378.5h1M370,103.5h1M370,107.5h1M370,112.5h1M370,116.5h1M370,366.5h1M370,375.5h1M371,102.5h1M371,106.5h1M371,111.5h1M371,115.5h1M371,170.5h1M371,299.5h1M371,367.5h1M371,376.5h1M372,105.5h1M372,114.5h1M372,371.5h1M373,104.5h1M373,113.5h1M373,169.5h1M373,300.5h1M373,359.5h1M373,372.5h1M374,109.5h1M374,360.5h1M374,369.5h1M374,373.5h1M375,108.5h1M375,120.5h1M375,168.5h1M375,301.5h1M375,357.5h1M375,361.5h1M375,370.5h1M376,107.5h1M376,111.5h1M376,358.5h1M376,362.5h1M376,371.5h1M377,110.5h1M377,123.5h1M377,302.5h1M377,354.5h1M377,359.5h1M378,109.5h1M378,118.5h1M378,122.5h1M378,355.5h1M378,360.5h1M379,117.5h1M379,126.5h1M379,303.5h1M379,352.5h1M379,356.5h1M379,364.5h1M380,125.5h1M380,128.5h1M380,353.5h1M380,357.5h1M380,365.5h1M381,120.5h1M381,124.5h1M381,354.5h1M381,362.5h1M381,366.5h1M382,115.5h1M382,119.5h1M382,123.5h1M382,355.5h1M382,363.5h1M383,126.5h1M383,347.5h1M383,359.5h1M384,133.5h1M384,348.5h1M384,360.5h1M385,117.5h1M385,121.5h1M385,345.5h1M385,357.5h1M385,361.5h1M386,120.5h1M386,124.5h1M386,136.5h1M386,342.5h1M386,358.5h1M387,131.5h1M387,350.5h1M388,139.5h1M388,339.5h1M388,347.5h1M388,351.5h1M389,134.5h1M389,344.5h1M389,348.5h1M390,129.5h1M390,141.5h1M391,137.5h1M391,341.5h1M392,132.5h1M392,346.5h1M392,350.5h1M393,139.5h1M393,331.5h1M394,135.5h1M394,343.5h1M395,149.5h1M395,329.5h1M396,137.5h1M396,145.5h1M396,152.5h1M396,326.5h1M396,333.5h1M396,337.5h1M397,133.5h1M397,345.5h1M398,155.5h1M399,143.5h1M399,320.5h1M399,335.5h1M401,160.5h1M401,317.5h1M402,141.5h1M405,147.5h1M405,169.5h1M405,331.5h1M407,150.5h1M408,325.5h1M410,322.5h1M411,319.5h1M412,162.5h1M412,316.5h1M414,196.5h1M414,282.5h1M415,199.5h1M415,310.5h1M416,171.5h1M416,307.5h1M417,174.5h1M417,304.5h1M418,301.5h1M422,288.5h1M423,193.5h1M423,285.5h1M424,196.5h1"/><path stroke="#00f" d="M199,126.5h3M349,283.5h2M262,356.5h3M200,125.5h1M200,127.5h1M201,131.5h1M202,135.5h1M203,139.5h1M204,143.5h1M205,147.5h1M207,151.5h1M208,155.5h1M209,159.5h1M210,163.5h1M211,167.5h1M212,171.5h1M213,175.5h1M214,179.5h1M215,183.5h1M216,187.5h1M218,191.5h1M219,195.5h1M220,199.5h1M221,203.5h1M222,207.5h1M223,211.5h1M224,215.5h1M225,219.5h1M226,223.5h1M227,227.5h1M229,231.5h1M230,235.5h1M231,239.5h1M232,243.5h1M233,247.5h1M234,251.5h1M235,255.5h1M236,259.5h1M237,263.5h1M239,267.5h1M240,271.5h1M241,275.5h1M242,279.5h1M243,283.5h1M244,287.5h1M245,291.5h1M246,295.5h1M247,299.5h1M248,303.5h1M250,307.5h1M251,311.5h1M252,315.5h1M253,319.5h1M254,323.5h1M255,327.5h1M256,331.5h1M257,335.5h1M258,339.5h1M260,343.5h1M261,347.5h1M262,351.5h1M263,355.5h1M263,357.5h1M350,284.5h1"/><path stroke="#0f0" d="M336,171.5h3M340,301.5h3M254,125.5h1M255,128.5h1M256,129.5h1M256,131.5h1M257,134.5h1M258,133.5h1M258,137.5h1M259,140.5h1M260,137.5h1M261,143.5h1M262,141.5h1M262,146.5h1M263,149.5h1M263,350.5h1M264,145.5h1M264,152.5h1M264,346.5h1M265,155.5h1M266,149.5h1M266,158.5h1M266,342.5h1M267,153.5h1M267,161.5h1M268,164.5h1M268,338.5h1M269,157.5h1M269,167.5h1M269,334.5h1M270,170.5h1M271,161.5h1M271,330.5h1M272,173.5h1M272,326.5h1M273,165.5h1M273,176.5h1M274,179.5h1M274,322.5h1M275,169.5h1M275,182.5h1M276,185.5h1M276,318.5h1M277,173.5h1M277,188.5h1M277,314.5h1M278,191.5h1M279,177.5h1M279,194.5h1M279,310.5h1M280,197.5h1M280,306.5h1M281,181.5h1M281,200.5h1M282,302.5h1M283,185.5h1M283,203.5h1M284,206.5h1M284,298.5h1M285,189.5h1M285,209.5h1M285,294.5h1M286,212.5h1M287,193.5h1M287,215.5h1M287,290.5h1M288,218.5h1M288,286.5h1M289,197.5h1M289,221.5h1M290,201.5h1M290,224.5h1M290,282.5h1M291,227.5h1M292,205.5h1M292,230.5h1M292,278.5h1M293,274.5h1M294,209.5h1M294,233.5h1M295,236.5h1M295,270.5h1M296,213.5h1M296,239.5h1M296,266.5h1M297,242.5h1M298,217.5h1M298,245.5h1M298,262.5h1M299,248.5h1M299,258.5h1M300,221.5h1M300,251.5h1M301,254.5h1M302,225.5h1M302,257.5h1M303,250.5h1M303,260.5h1M304,229.5h1M304,246.5h1M305,263.5h1M306,233.5h1M306,242.5h1M306,266.5h1M307,238.5h1M307,269.5h1M308,237.5h1M308,272.5h1M309,234.5h1M309,275.5h1M310,241.5h1M310,278.5h1M311,230.5h1M311,281.5h1M312,226.5h1M312,245.5h1M312,284.5h1M313,249.5h1M313,287.5h1M314,222.5h1M314,290.5h1M315,218.5h1M315,253.5h1M316,293.5h1M317,214.5h1M317,257.5h1M317,296.5h1M318,299.5h1M319,210.5h1M319,261.5h1M319,302.5h1M320,206.5h1M320,305.5h1M321,265.5h1M321,308.5h1M322,202.5h1M322,311.5h1M323,198.5h1M323,269.5h1M323,314.5h1M325,194.5h1M325,273.5h1M327,190.5h1M327,277.5h1M328,186.5h1M329,281.5h1M330,182.5h1M331,178.5h1M331,285.5h1M333,289.5h1M335,293.5h1M337,170.5h1M337,172.5h1M341,300.5h1M341,302.5h1"/><path stroke="#f00" d="M254,120.5h3M326,319.5h3M308,336.5h3M255,119.5h1M255,121.5h1M306.5,330v3M307.5,324v6M308.5,318v6M309.5,312v6M309,335.5h1M309,337.5h1M310.5,306v6M311.5,300v6M312.5,294v6M313.5,289v5M314.5,283v6M315.5,277v6M316.5,271v6M317.5,265v6M318.5,259v6M319.5,253v6M320.5,248v5M321.5,242v6M322.5,236v6M323.5,230v6M324.5,224v6M325.5,218v6M326.5,213v5M327.5,207v6M327,318.5h1M327,320.5h1M328.5,201v6M329.5,195v6M330.5,189v6M331.5,183v6M332.5,177v6M333.5,174v3"/><path stroke="#0ff" d="M333,180.5h2M333,183.5h2M333,186.5h2M333,189.5h3M334,192.5h2M334,207.5h2M334,210.5h2M334,213.5h2M334,216.5h2M334,219.5h2M335,225.5h2M335,228.5h2M335,231.5h2M335,234.5h2M335,237.5h2M335,240.5h2M335,243.5h2M336,252.5h2M342,252.5h2M336,255.5h2M336,258.5h2M336,261.5h2M336,264.5h2M345,276.5h2M339,285.5h2M262,352.5h1M264,350.5h1M266,349.5h1M268,347.5h1M270,345.5h1M272.5,343v2M274,342.5h1M276,340.5h1M278.5,338v2M280,337.5h1M282,335.5h1M284.5,333v2M286.5,331v2M288,330.5h1M290.5,328v2M292.5,326v2M294,325.5h1M296.5,323v2M298.5,321v2M300.5,319v2M302.5,318v2M304.5,316v2M306.5,314v2M308.5,313v2M310,312.5h1M312.5,309v2M314,307.5h1M314,309.5h1M316.5,306v2M318.5,304v2M320,302.5h1M320,304.5h1M322.5,301v2M324.5,299v2M326,297.5h1M326,299.5h1M328,295.5h1M328,297.5h1M330.5,294v2M332,292.5h1M332,294.5h1M333.5,177v2M334,182.5h1M334,184.5h1M334,195.5h1M334,198.5h1M334,201.5h1M334,204.5h1M334,290.5h1M334,292.5h1M335,188.5h1M335,190.5h1M335,194.5h1M335,222.5h1M335,246.5h1M335,249.5h1M336.5,195v2M336,198.5h1M336.5,200v3M336,267.5h1M336,270.5h1M336,273.5h1M336,276.5h1M336,279.5h1M336,282.5h1M336.5,289v2M337,204.5h1M337.5,206v3M337,210.5h1M337,246.5h1M337,249.5h1M337,285.5h1M337,288.5h1M337,291.5h1M337,294.5h1M337,297.5h1M338.5,212v3M338,216.5h1M338,218.5h1M338,267.5h1M338,270.5h1M338,273.5h1M338,276.5h1M338,279.5h1M338,282.5h1M338,287.5h1M338,289.5h1M339.5,219v2M339,222.5h1M339.5,224v3M339,288.5h1M339,291.5h1M339,294.5h1M340,228.5h1M340.5,230v3M340,234.5h1M340,236.5h1M340,287.5h1M341.5,237v2M341,240.5h1M341.5,242v3M342,246.5h1M342.5,248v3M342,283.5h1M342,285.5h1M343.5,254v3M343,258.5h1M343,260.5h1M344.5,261v2M344,264.5h1M344.5,266v3M344,282.5h1M344,284.5h1M345,270.5h1M345.5,272v3M346.5,278v2"/><path stroke="#ff0" d="M350,282.5h3M342,298.5h3M337,298.5h1M338.5,296v2M339,295.5h1M343,297.5h1M343,299.5h1M346.5,280v3M351,281.5h1M351,283.5h1"/></g>
<g fill="none" stroke-width="1" stroke-linecap="square" shape-rendering="crispEdges" transform="translate(0.5,0.5)">
<g stroke="#f00"><path d="M447,276L447,268L445,262L443,260L441,260L439,262L439,264L441,266M447,268L449,262L451,260L453,260L455,262L455,264L453,266"/></g>
<g stroke="#f00"><path d="M439,294L440,294L442,296L442,297L440,299L439,299L437,297L437,296Z"/><path d="M441.3,294.7L445,291M442.5,291L445,291L445,293.5"/></g>
<g stroke="#f00"><path d="M70,258L71,258L73,260L73,261L71,263L70,263L68,261L68,260Z"/><path d="M72.3,258.7L76,255M73.5,255L76,255L76,257.5"/></g>
<g stroke="#ff0"><circle cx="433.1" cy="163.1" r="6.05"/><path d="M427,153L428.5,155.5L430.5,156.5M439,153L437.5,155.5L435.5,156.5"/></g>
<g stroke="#ff0"><path d="M441,183L443,183L444,184L444,186L443,187L441,187L440,186L440,184Z"/><path d="M442,187L442,191M440,189L444,189"/></g>
<g stroke="#ff0"><path d="M102,333L104,333L105,334L105,336L104,337L102,337L101,336L101,334Z"/><path d="M103,337L103,341M101,339L105,339"/></g>
<g stroke="#0f0"><path d="M362,66L364,68L374,68L376,66M362,82L364,80L374,80L376,82M366,68L366,80M372,68L372,80"/></g>
<g stroke="#0f0"><path d="M387,89L389,89L390,90L390,92L389,93L387,93L386,92L386,90Z"/><path d="M386,88L387,89M390,88L389,89M388,93L388,96M386,95L390,95"/></g>
<g stroke="#0f0"><path d="M175,391L177,391L178,392L178,394L177,395L175,395L174,394L174,392Z"/><path d="M174,390L175,391M178,390L177,391M176,395L176,398M174,397L178,397"/></g>
<g stroke="#00f"><path d="M272,26L274,26L276,28L276,30L274,32L272,32L270,30L270,28Z"/><path d="M262,30L264,30L266,32L266,34L264,36L262,36L260,34L260,32Z"/><path d="M260,28L263,25L265,25L266,24L270,24L272,25.5M276,34L273,37L271,37L270,38L266,38L264,36.5"/></g>
<g stroke="#00f"><path d="M292,34L293,33L295,33L296,33.5L297.5,35L298,36L298,38L297.5,39L296,40.5L295,41L293,41L292,40L293.5,38.5L294,37.5L294,36.5L293.5,35.5Z"/></g>
<g stroke="#00f"><path d="M270,400L271,399L273,399L274,399.5L275.5,401L276,402L276,404L275.5,405L274,406.5L273,407L271,407L270,406L271.5,404.5L272,403.5L272,402.5L271.5,401.5Z"/></g>
<g stroke="#f00"><path d="M153,49L155,51L157,49L155,47L155,41L159,37L163,37L167,41L167,45L165,47L165,49L169,53"/></g>
<g stroke="#f00"><circle cx="187.1" cy="36.1" r="3.85"/><rect x="186.5" y="35.5" width="1" height="1" fill="#f00" stroke="none"/></g>
<g stroke="#f00"><circle cx="355.1" cy="360.1" r="3.85"/><rect x="354.5" y="359.5" width="1" height="1" fill="#f00" stroke="none"/></g>
<g stroke="#ff0"><path d="M66,102L68,104L68,116M68,104L70,102L72,104L72,116M72,104L74,102L76,104L76,114L80,118M76,108L80,104L80,113.5L76,118"/></g>
<g stroke="#0f0"><path d="M91,87L93,87L94,88L94,90L93,91L91,91L90,90L90,88Z"/><path d="M90,86L91,87M94,86L93,87M92,91L92,94M90,93L94,93"/></g>
<g stroke="#0f0"><path d="M397,288L399,288L400,289L400,291L399,292L397,292L396,291L396,289Z"/><path d="M396,287L397,288M400,287L399,288M398,292L398,295M396,294L400,294"/></g>
<g stroke="#0f0"><path d="M23,216L39,216M23,212L29,212L27,210L27,208L29,206L33,206L35,208L35,210L33,212L39,212"/></g>
<g stroke="#ff0"><path d="M36,179L38,179L39,180L39,182L38,183L36,183L35,182L35,180Z"/><path d="M37,183L37,187M35,185L39,185"/></g>
<g stroke="#ff0"><path d="M405,215L407,215L408,216L408,218L407,219L405,219L404,218L404,216Z"/><path d="M406,219L406,223M404,221L408,221"/></g>
<g stroke="#00f"><path d="M37,309L39,311L39,323M39,311L41,309L43,311L43,323M43,311L45,309L47,311L47,323L49,325L50,325L52,323L52,320M51,321L52,320L53,321"/></g>
<g stroke="#00f"><path d="M36,287L36,287L37,288L37,288L36,289L36,289L35,288L35,288Z"/><path d="M33,287L33,289.5L34.5,291L37.5,291L39,289.5L39,287M36,291L36,295M34,293L38,293"/></g>
<g stroke="#00f"><path d="M375,137L375,137L376,138L376,138L375,139L375,139L374,138L374,138Z"/><path d="M372,137L372,139.5L373.5,141L376.5,141L378,139.5L378,137M375,141L375,145M373,143L377,143"/></g>
<g stroke="#f00"><path d="M102,412L118,396M113,396L118,396L118,401M104,402L112,410"/></g>
<g stroke="#f00"><path d="M86.5,383L87.2,383L88,383.8L88,385L86,388.5L86,389L93.2,389M92,382L91,383L91,390"/></g>
<g stroke="#f00"><path d="M298.5,81L299.2,81L300,81.8L300,83L298,86.5L298,87L305.2,87M304,80L303,81L303,88"/></g>
<g stroke="#ff0"><path d="M202,441L204,439L204,447L206,449L206,453M206,449L208,447L208,443L210,439L218,447L218,453L216,455M212,441L214,439L216,439L218,441L218,443L216,445"/></g>
<g stroke="#ff0"><path d="M180,438L184,438M182,437L182,444M182,441.5L183.5,440L185,440L186,441L186,442L185,443L185,444L186,445"/></g>
<g stroke="#ff0"><path d="M202,72L206,72M204,71L204,78M204,75.5L205.5,74L207,74L208,75L208,76L207,77L207,78L208,79"/></g>
<g stroke="#0f0"><path d="M309,431L313,425L315,431L319,425L321,431L325,425M309,441L313,435L315,441L319,435L321,441L325,435"/></g>
<g stroke="#0f0"><path d="M291,444L291,444L292,445L292,445L291,446L291,446L290,445L290,445Z"/><path d="M288,438L289,439L289,442L288,443M294,438L293,439L293,442L294,443M289,441L293,441M291,440L291,443.8"/></g>
<g stroke="#0f0"><path d="M123,120L123,120L124,121L124,121L123,122L123,122L122,121L122,121Z"/><path d="M120,114L121,115L121,118L120,119M126,114L125,115L125,118L126,119M121,117L125,117M123,116L123,119.8"/></g>
<g stroke="#00f"><path d="M396,360L398,362L400,366L400,370L398,374L396,376M412,360L410,362L408,366L408,370L410,374L412,376M396,368L412,368"/></g>
<g stroke="#00f"><path d="M383,384L383,386L383.5,387L384.5,387.5L385.5,388L386.5,388L387.5,387.5L388.5,387L389,386L389,384M386,384L386,392M384,390L388,390M382.5,385L383.5,385M385.5,385L386.5,385M388.5,385L389.5,385"/></g>
<g stroke="#00f"><path d="M77,183L77,185L77.5,186L78.5,186.5L79.5,187L80.5,187L81.5,186.5L82.5,186L83,185L83,183M80,183L80,191M78,189L82,189M76.5,184L77.5,184M79.5,184L80.5,184M82.5,184L83.5,184"/></g>
<g stroke="#f00"><circle cx="342.1" cy="339.1" r="7.85"/><rect x="341.5" y="338.5" width="1" height="1" fill="#f00" stroke="none"/></g>
<g stroke="#00f"><path d="M186,97L188,95L192,95L194,96L197,99L198,101L198,105L197,107L194,110L192,111L188,111L186,109L189,106L190,104L190,102L189,100Z"/></g>
<g stroke="#0f0"><circle cx="354.1" cy="323.1" r="3.85"/><path d="M350,317L352,319M358,317L356,319M354,327L354,333M350,331L358,331"/></g>
<g stroke="#ff0"><circle cx="364.1" cy="305.1" r="3.85"/><path d="M364,309L364,317M360,313L368,313"/></g>
<g stroke="#f00"><circle cx="320.1" cy="358.1" r="4.85"/><path d="M323.6,354.4L331,347M326,347L331,347L331,352"/></g>
<g stroke="#f00"><path d="M253,91L254.5,91L256,92.5L256,95L252,102L252,103L266.5,103M264,89L262,91L262,105"/></g>
<g stroke="#ff0"><path d="M372,268L380,268M376,266L376,280M376,275L379,272L382,272L384,274L384,276L382,278L382,280L384,282"/></g>
<g stroke="#0f0"><path d="M356,161L358,161L359,162L359,164L358,165L356,165L355,164L355,162Z"/><path d="M351,149L353,151L353,157L351,159M363,149L361,151L361,157L363,159M353,155L361,155M357,153L357,160.5"/></g>
<g stroke="#00f"><path d="M366,284L366,288L367,290L369,291L371,292L373,292L375,291L377,290L378,288L378,284M372,284L372,300M368,296L376,296M365,286L367,286M371,286L373,286M377,286L379,286"/></g>
<g stroke="#00f"><path d="M266,372L268,372L269,373L269,375L268,376L266,376L265,375L265,373Z"/><path d="M261,372L261,377L264,380L270,380L273,377L273,372M267,380L267,388M263,384L271,384"/></g>
<g stroke="#f00"><path d="M624,142.5L632,142.5M624,140.5L627,140.5L626,139.5L626,138.5L627,137.5L629,137.5L630,138.5L630,139.5L629,140.5L632,140.5"/></g>
<g stroke="#ff0"><path d="M624,146L625,147L625,153M625,147L626,146L627,147L627,153M627,147L628,146L629,147L629,153L630,154L630.5,154L631.5,153L631.5,151.5M631,152L631.5,151.5L632,152"/></g>
<g stroke="#0f0"><path d="M624,164L632,156M629.5,156L632,156L632,158.5M625,159L629,163"/></g>
<g stroke="#00f"><path d="M624,167L625,166L625,170L626,171L626,173M626,171L627,170L627,168L628,166L632,170L632,173L631,174M629,167L630,166L631,166L632,167L632,168L631,169"/></g>
<g stroke="#f00"><path d="M624,179L626,176L627,179L629,176L630,179L632,176M624,184L626,181L627,184L629,181L630,184L632,181"/></g>
<g stroke="#ff0"><path d="M624,186L625,187L626,189L626,191L625,193L624,194M632,186L631,187L630,189L630,191L631,193L632,194M624,190L632,190"/></g>
<g stroke="#0f0"><path d="M628,204L628,200L627,197L626,196L625,196L624,197L624,198L625,199M628,200L629,197L630,196L631,196L632,197L632,198L631,199"/></g>
<g stroke="#00f"><path d="M627,208L629,208L631,210L631,212L629,214L627,214L625,212L625,210Z"/><path d="M625,206L625.8,207.2L626.8,207.8M631,206L630.2,207.2L629.2,207.8"/></g>
<g stroke="#f00"><path d="M624.5,216L625.5,217L630.5,217L631.5,216M624.5,224L625.5,223L630.5,223L631.5,224M626.5,217L626.5,223M629.5,217L629.5,223"/></g>
<g stroke="#ff0"><path d="M630,228L631,228L632,229L632,229L631,230L630,230L629,229L629,229Z"/><path d="M625,230L626,230L627,231L627,231L626,232L625,232L624,231L624,231Z"/><path d="M624,228.5L625.5,227L626.5,227L627,226.5L629,226.5L630,227.2M632,231.5L630.5,233L629.5,233L629,233.5L627,233.5L626,232.8"/></g>
<g stroke="#0f0"><path d="M624,242L625,243L626,242L625,241L625,238L627,236L629,236L631,238L631,240L630,241L630,242L632,244"/></g>
<g stroke="#00f"><path d="M624.5,246L625.5,247L625.5,253M625.5,247L626.5,246L627.5,247L627.5,253M627.5,247L628.5,246L629.5,247L629.5,252L631.5,254M629.5,249L631.5,247L631.5,251.8L629.5,254"/></g>
<g stroke="#f00"><circle cx="628.1" cy="270.1" r="3.85"/><rect x="627.5" y="269.5" width="1" height="1" fill="#f00" stroke="none"/></g>
<g stroke="#00f"><path d="M625,277L626,276L628,276L629,276.5L630.5,278L631,279L631,281L630.5,282L629,283.5L628,284L626,284L625,283L626.5,281.5L627,280.5L627,279.5L626.5,278.5Z"/></g>
<g stroke="#0f0"><path d="M627,287L629,287L630,288L630,290L629,291L627,291L626,290L626,288Z"/><path d="M626,286L627,287M630,286L629,287M628,291L628,294M626,293L630,293"/></g>
<g stroke="#ff0"><path d="M627,296L629,296L630,297L630,299L629,300L627,300L626,299L626,297Z"/><path d="M628,300L628,304M626,302L630,302"/></g>
<g stroke="#f00"><path d="M626,309L627,309L629,311L629,312L627,314L626,314L624,312L624,311Z"/><path d="M628.3,309.7L632,306M629.5,306L632,306L632,308.5"/></g>
<g stroke="#f00"><path d="M624.5,317L625.2,317L626,317.8L626,319L624,322.5L624,323L631.2,323M630,316L629,317L629,324"/></g>
<g stroke="#ff0"><path d="M625,327L629,327M627,326L627,333M627,330.5L628.5,329L630,329L631,330L631,331L630,332L630,333L631,334"/></g>
<g stroke="#0f0"><path d="M628,342L628,342L629,343L629,343L628,344L628,344L627,343L627,343Z"/><path d="M625,336L626,337L626,340L625,341M631,336L630,337L630,340L631,341M626,339L630,339M628,338L628,341.8"/></g>
<g stroke="#00f"><path d="M625,346L625,348L625.5,349L626.5,349.5L627.5,350L628.5,350L629.5,349.5L630.5,349L631,348L631,346M628,346L628,354M626,352L630,352M624.5,347L625.5,347M627.5,347L628.5,347M630.5,347L631.5,347"/></g>
<g stroke="#00f"><path d="M628,356L628,356L629,357L629,357L628,358L628,358L627,357L627,357Z"/><path d="M625,356L625,358.5L626.5,360L629.5,360L631,358.5L631,356M628,360L628,364M626,362L630,362"/></g>
</g>
<g filter="url(#tf2)" font-family="'Liberation Sans',sans-serif" font-size="12.5" text-anchor="middle">
<text transform="translate(76.5,284) scale(0.85,1)" fill="#f00">1</text>
<text transform="translate(118.5,360) scale(0.85,1)" fill="#ff0">2</text>
<text transform="translate(200.5,407) scale(0.85,1)" fill="#0f0">3</text>
<text transform="translate(296.5,402) scale(0.85,1)" fill="#00f">4</text>
<text transform="translate(369.5,349) scale(0.85,1)" fill="#f00">5</text>
<text transform="translate(403.5,279) scale(0.85,1)" fill="#ff0">6</text>
<text transform="translate(402.5,204) scale(0.85,1)" fill="#0f0">7</text>
<text transform="translate(360.5,128) scale(0.85,1)" fill="#00f">8</text>
<text transform="translate(278.5,81) scale(0.85,1)" fill="#f00">9</text>
<text transform="translate(183.5,86) scale(0.85,1)" letter-spacing="2.4" fill="#ff0">10</text>
<text transform="translate(110.5,139) scale(0.85,1)" letter-spacing="2.4" fill="#0f0">11</text>
<text transform="translate(76.5,209) scale(0.85,1)" letter-spacing="2.4" fill="#00f">12</text>
</g>
<g filter="url(#tf)" font-family="'Liberation Mono',monospace" font-size="10" style="white-space:pre"><text xml:space="preserve" x="486" y="14"><tspan fill="#fff">Astrolog 5.41G</tspan></text>
<text xml:space="preserve" x="486" y="24"><tspan fill="#c0c0c0">Chart of the Moment</tspan></text>
<text xml:space="preserve" x="486" y="34"><tspan fill="#fff">Sat February 28, 2026</tspan></text>
<text xml:space="preserve" x="486" y="44"><tspan fill="#fff"> 9:28:00pm (ST -8:00 GMT)</tspan></text>
<text xml:space="preserve" x="486" y="54"><tspan fill="#c0c0c0">San Francisco, CA</tspan></text>
<text xml:space="preserve" x="486" y="64"><tspan fill="#c0c0c0">122°41'00"W 37°79'00"N</tspan></text>
<text xml:space="preserve" x="486" y="74"><tspan fill="#c0c0c0">Placidus houses.</tspan></text>
<text xml:space="preserve" x="486" y="84"><tspan fill="#c0c0c0">Tropical, Geocentric.</tspan></text>
<text xml:space="preserve" x="486" y="94"><tspan fill="#fff">Julian Day = 2461100.7278</tspan></text>
<text xml:space="preserve" x="486" y="104"><tspan fill="#c0c0c0">Obliquity = 23°26'09"</tspan></text>
<text xml:space="preserve" x="486" y="114"><tspan fill="#c0c0c0">Sidereal time:  7:53:25</tspan></text>
<text xml:space="preserve" x="486" y="124"><tspan fill="#c0c0c0">DeltaT =  95.4145</tspan></text>
<text xml:space="preserve" x="486" y="144"><tspan fill="#f00"> 1st house: </tspan><tspan fill="#0f0">22Lib57</tspan></text>
<text xml:space="preserve" x="486" y="154"><tspan fill="#ff0"> 2nd house: </tspan><tspan fill="#00f">20Sco53</tspan></text>
<text xml:space="preserve" x="486" y="164"><tspan fill="#0f0"> 3rd house: </tspan><tspan fill="#f00">22Sag25</tspan></text>
<text xml:space="preserve" x="486" y="174"><tspan fill="#00f"> 4th house: </tspan><tspan fill="#ff0">26Cap21</tspan></text>
<text xml:space="preserve" x="486" y="184"><tspan fill="#f00"> 5th house: </tspan><tspan fill="#0f0">29Aqu23</tspan></text>
<text xml:space="preserve" x="486" y="194"><tspan fill="#ff0"> 6th house: </tspan><tspan fill="#00f">28Pis32</tspan></text>
<text xml:space="preserve" x="486" y="204"><tspan fill="#0f0"> 7th house: </tspan><tspan fill="#f00">22Ari57</tspan></text>
<text xml:space="preserve" x="486" y="214"><tspan fill="#00f"> 8th house: </tspan><tspan fill="#ff0">20Tau53</tspan></text>
<text xml:space="preserve" x="486" y="224"><tspan fill="#f00"> 9th house: </tspan><tspan fill="#0f0">22Gem25</tspan></text>
<text xml:space="preserve" x="486" y="234"><tspan fill="#ff0">10th house: </tspan><tspan fill="#00f">26Can21</tspan></text>
<text xml:space="preserve" x="486" y="244"><tspan fill="#0f0">11th house: </tspan><tspan fill="#f00">29Leo23</tspan></text>
<text xml:space="preserve" x="486" y="254"><tspan fill="#00f">12th house: </tspan><tspan fill="#ff0">28Vir32</tspan></text>
<text xml:space="preserve" x="486" y="274"><tspan fill="#f00"> Sun: </tspan><tspan fill="#00f">10Pis38</tspan><tspan fill="#fff"> </tspan><tspan fill="#c0c0c0"> + 0°00'</tspan></text>
<text xml:space="preserve" x="486" y="284"><tspan fill="#00f">Moon: </tspan><tspan fill="#f00">12Leo16</tspan><tspan fill="#fff"> </tspan><tspan fill="#c0c0c0"> + 2°23'</tspan></text>
<text xml:space="preserve" x="486" y="294"><tspan fill="#0f0">Merc: </tspan><tspan fill="#00f">21Pis52</tspan><tspan fill="#fff">R</tspan><tspan fill="#c0c0c0"> + 3°20'</tspan></text>
<text xml:space="preserve" x="486" y="304"><tspan fill="#ff0">Venu: </tspan><tspan fill="#00f">23Pis30</tspan><tspan fill="#fff"> </tspan><tspan fill="#c0c0c0"> - 1°21'</tspan></text>
<text xml:space="preserve" x="486" y="314"><tspan fill="#f00">Mars: </tspan><tspan fill="#0f0">28Aqu55</tspan><tspan fill="#fff"> </tspan><tspan fill="#c0c0c0"> - 1°06'</tspan></text>
<text xml:space="preserve" x="486" y="324"><tspan fill="#f00">Jupi: </tspan><tspan fill="#00f">15Can15</tspan><tspan fill="#fff">R</tspan><tspan fill="#c0c0c0"> + 0°21'</tspan></text>
<text xml:space="preserve" x="486" y="334"><tspan fill="#ff0">Satu: </tspan><tspan fill="#f00"> 1Ari45</tspan><tspan fill="#fff"> </tspan><tspan fill="#c0c0c0"> - 2°08'</tspan></text>
<text xml:space="preserve" x="486" y="344"><tspan fill="#0f0">Uran: </tspan><tspan fill="#ff0">27Tau44</tspan><tspan fill="#fff"> </tspan><tspan fill="#c0c0c0"> - 0°11'</tspan></text>
<text xml:space="preserve" x="486" y="354"><tspan fill="#00f">Nept: </tspan><tspan fill="#f00"> 1Ari03</tspan><tspan fill="#fff"> </tspan><tspan fill="#c0c0c0"> - 1°18'</tspan></text>
<text xml:space="preserve" x="486" y="364"><tspan fill="#00f">Plut: </tspan><tspan fill="#0f0"> 4Aqu32</tspan><tspan fill="#fff"> </tspan><tspan fill="#c0c0c0"> - 3°52'</tspan></text>
<text xml:space="preserve" x="486" y="384"><tspan fill="#c0c0c0">Fire: 3, Earth: 1,</tspan></text>
<text xml:space="preserve" x="486" y="394"><tspan fill="#c0c0c0">Air : 2, Water: 4</tspan></text>
<text xml:space="preserve" x="486" y="404"><tspan fill="#c0c0c0">Car: 3, Fix: 4, Mut: 3</tspan></text>
<text xml:space="preserve" x="486" y="414"><tspan fill="#c0c0c0">Yang: 5, Yin: 5</tspan></text>
<text xml:space="preserve" x="486" y="424"><tspan fill="#c0c0c0">M: 3, N: 7, A: 1, D: 9</tspan></text>
<text xml:space="preserve" x="486" y="434"><tspan fill="#c0c0c0">Ang: 3, Suc: 4, Cad: 3</tspan></text>
<text xml:space="preserve" x="486" y="444"><tspan fill="#c0c0c0">Learn: 5, Share: 5</tspan></text></g>
</svg>
</body></html>
